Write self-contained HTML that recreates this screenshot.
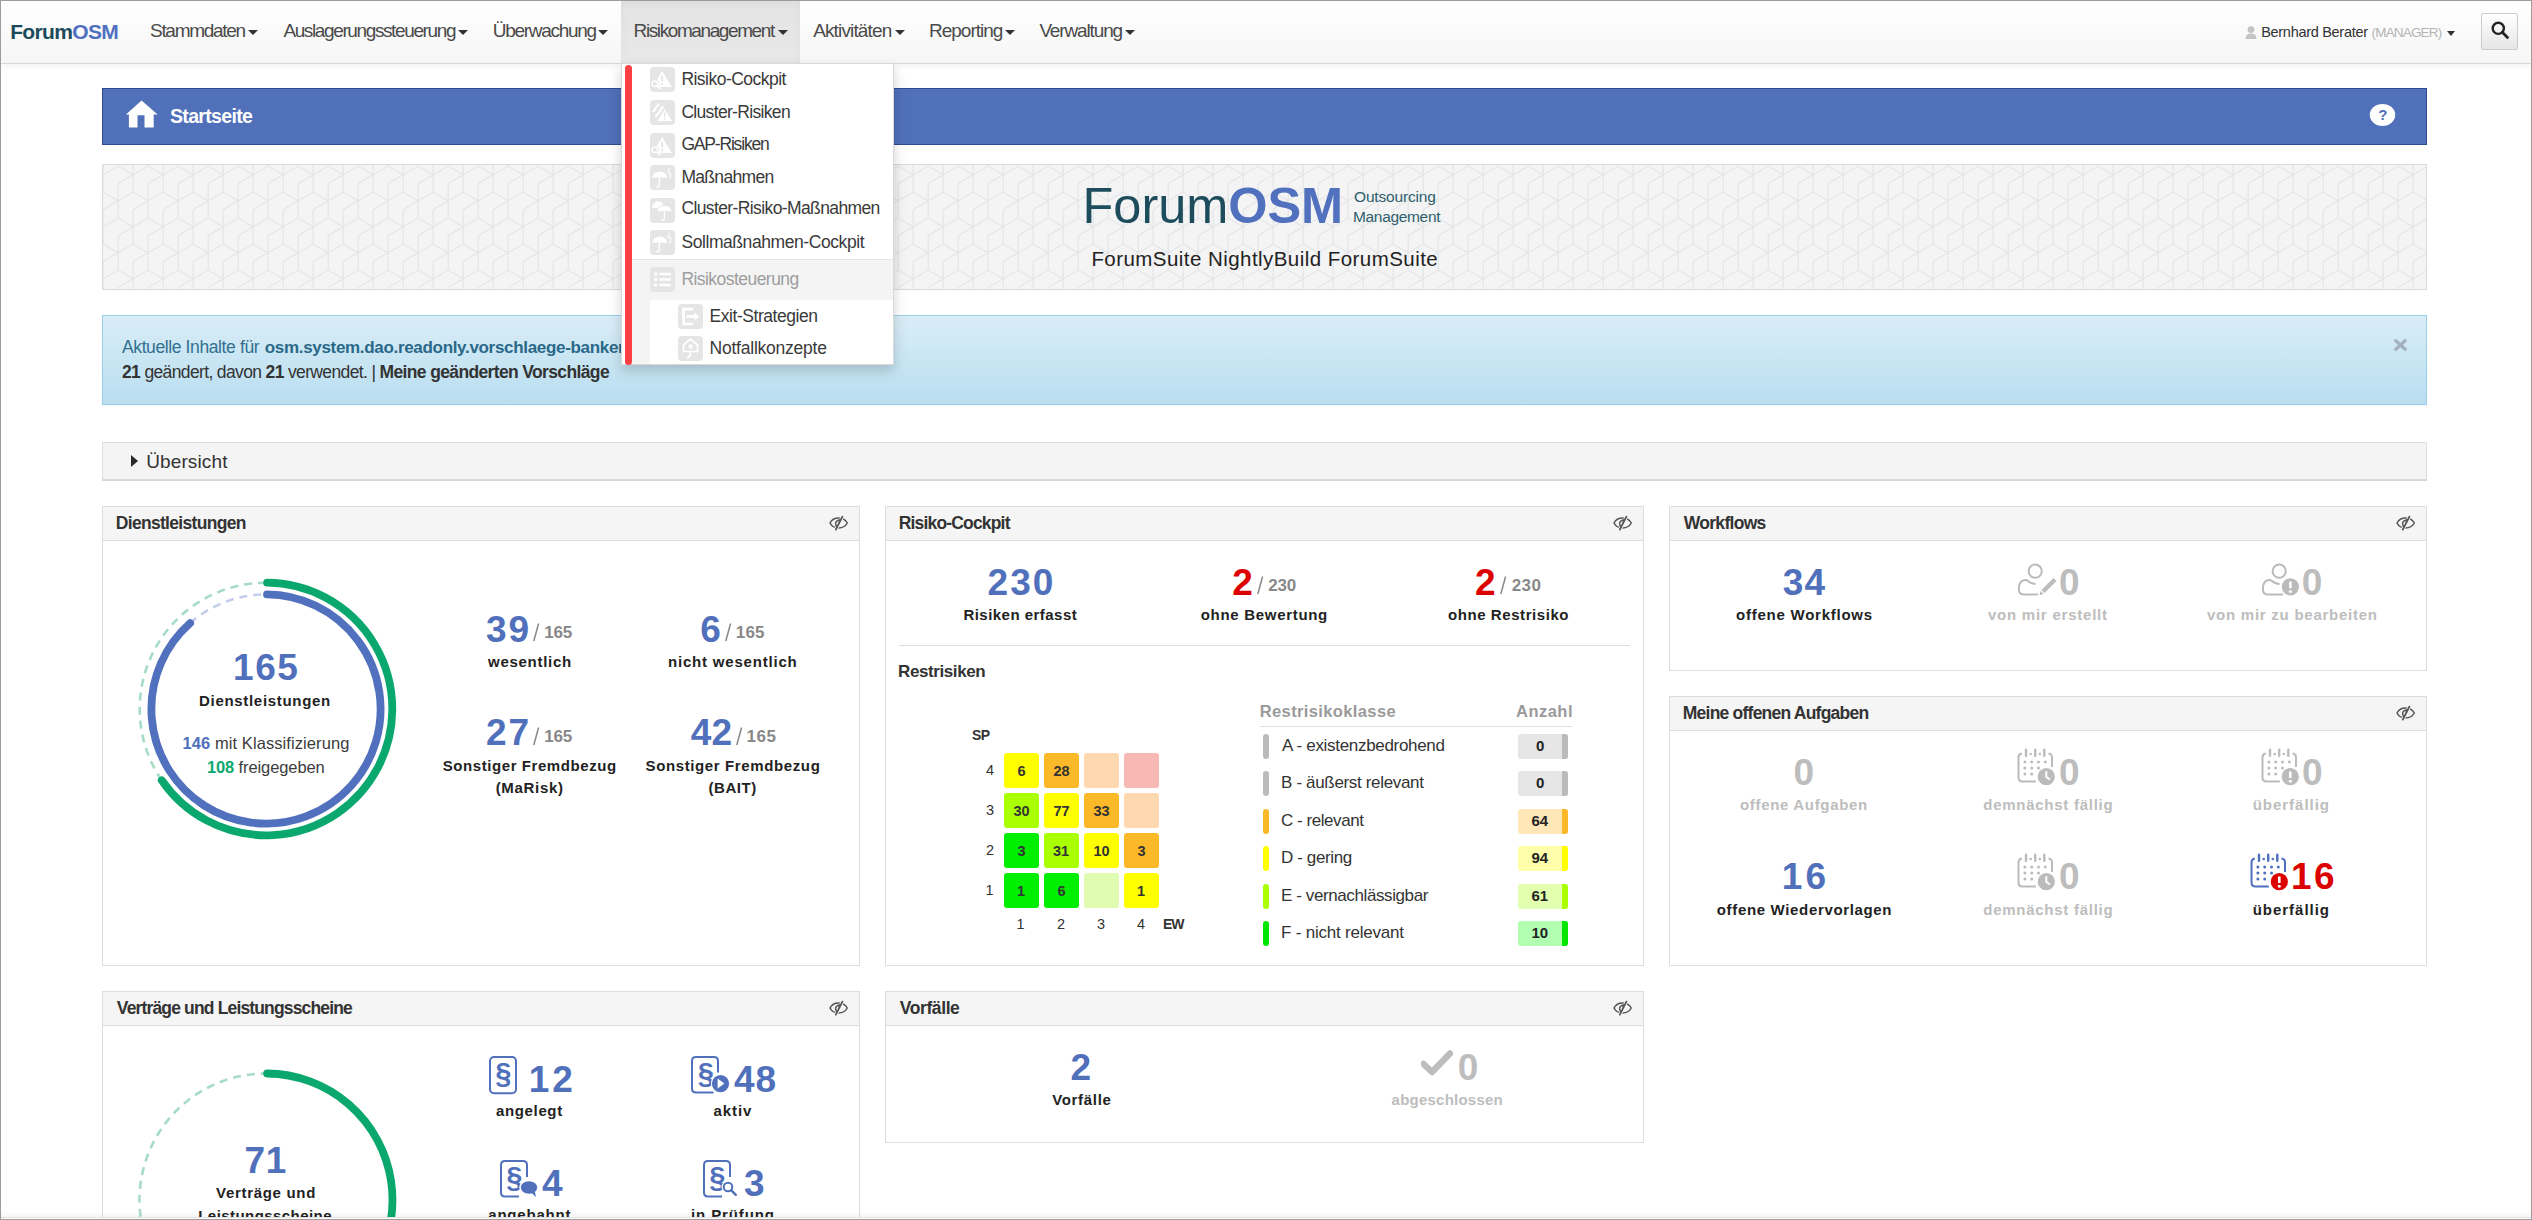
<!DOCTYPE html>
<html><head><meta charset="utf-8"><title>ForumOSM</title>
<style>
html,body{margin:0;padding:0;}
body{width:2532px;height:1220px;overflow:hidden;position:relative;background:#fff;font-family:'Liberation Sans',sans-serif;}
.t{position:absolute;white-space:nowrap;line-height:1;}
.a{position:absolute;box-sizing:border-box;}
</style></head><body>

<div class="a" style="left:0px;top:0px;width:2532px;height:64px;background:linear-gradient(#ffffff,#f6f6f6);border-bottom:1px solid #d8d8d8;box-shadow:0 1px 7px rgba(0,0,0,.07)"></div>
<div class="a" style="left:621px;top:1px;width:179px;height:62px;background:linear-gradient(#e4e4e4,#e8e8e8);box-shadow:inset 0 3px 9px rgba(0,0,0,.04)"></div>
<div class="t" id="t0" style="left:10.18px;top:21.22px;font-size:21px;font-weight:700;color:#1b4b5a;letter-spacing:-0.657px;"><span style="color:#1b4b5a">Forum</span><span style="color:#4f6fbf">OSM</span></div>
<div class="t" id="t1" style="left:150.00px;top:21.32px;font-size:19px;font-weight:400;color:#4a4a4a;letter-spacing:-1.289px;">Stammdaten</div>
<div class="a" style="left:247.5px;top:30px;width:0;height:0;border-left:5.0px solid transparent;border-right:5.0px solid transparent;border-top:5.2px solid #333"></div>
<div class="t" id="t2" style="left:283.38px;top:21.32px;font-size:19px;font-weight:400;color:#4a4a4a;letter-spacing:-1.380px;">Auslagerungssteuerung</div>
<div class="a" style="left:458.1px;top:30px;width:0;height:0;border-left:5.0px solid transparent;border-right:5.0px solid transparent;border-top:5.2px solid #333"></div>
<div class="t" id="t3" style="left:492.76px;top:21.32px;font-size:19px;font-weight:400;color:#4a4a4a;letter-spacing:-1.280px;">Überwachung</div>
<div class="a" style="left:597.9px;top:30px;width:0;height:0;border-left:5.0px solid transparent;border-right:5.0px solid transparent;border-top:5.2px solid #333"></div>
<div class="t" id="t4" style="left:633.57px;top:21.32px;font-size:19px;font-weight:400;color:#4a4a4a;letter-spacing:-1.400px;">Risikomanagement</div>
<div class="a" style="left:777.7px;top:30px;width:0;height:0;border-left:5.0px solid transparent;border-right:5.0px solid transparent;border-top:5.2px solid #333"></div>
<div class="t" id="t5" style="left:813.17px;top:21.32px;font-size:19px;font-weight:400;color:#4a4a4a;letter-spacing:-0.860px;">Aktivitäten</div>
<div class="a" style="left:895.0px;top:30px;width:0;height:0;border-left:5.0px solid transparent;border-right:5.0px solid transparent;border-top:5.2px solid #333"></div>
<div class="t" id="t6" style="left:929.00px;top:21.32px;font-size:19px;font-weight:400;color:#4a4a4a;letter-spacing:-1.000px;">Reporting</div>
<div class="a" style="left:1005.2px;top:30px;width:0;height:0;border-left:5.0px solid transparent;border-right:5.0px solid transparent;border-top:5.2px solid #333"></div>
<div class="t" id="t7" style="left:1039.38px;top:21.32px;font-size:19px;font-weight:400;color:#4a4a4a;letter-spacing:-1.133px;">Verwaltung</div>
<div class="a" style="left:1125.3px;top:30px;width:0;height:0;border-left:5.0px solid transparent;border-right:5.0px solid transparent;border-top:5.2px solid #333"></div>
<svg class="a" style="left:2245px;top:26px;" width="12" height="13" viewBox="0 0 12 13"><circle cx="6" cy="3.6" r="3.4" fill="#c4c4c4"/><path d="M0.5 13 Q0.5 7.6 6 7.6 Q11.5 7.6 11.5 13 Z" fill="#c4c4c4"/></svg>
<div class="t" id="t8" style="left:2261.18px;top:24.83px;font-size:14.5px;font-weight:400;color:#333;letter-spacing:-0.293px;">Bernhard Berater</div>
<div class="t" id="t9" style="left:2371.57px;top:25.67px;font-size:13.5px;font-weight:400;color:#b5b5b5;letter-spacing:-0.825px;">(MANAGER)</div>
<div class="a" style="left:2446.5px;top:31px;width:0;height:0;border-left:4.5px solid transparent;border-right:4.5px solid transparent;border-top:5px solid #333"></div>
<div class="a" style="left:2481px;top:13px;width:37px;height:37px;border:1px solid #cccccc;border-radius:2px;background:linear-gradient(#ffffff,#e6e6e6)"></div>
<svg class="a" style="left:2491px;top:21px;" width="19" height="19" viewBox="0 0 19 19"><circle cx="7.3" cy="7.3" r="5.6" fill="none" stroke="#222" stroke-width="2.4"/><line x1="11.3" y1="11.3" x2="16.5" y2="16.5" stroke="#222" stroke-width="2.8" stroke-linecap="round"/></svg>
<div class="a" style="left:102px;top:88px;width:2325px;height:57px;background:#5070ba;border:1px solid #2f4b8f"></div>
<svg class="a" style="left:124px;top:99px;" width="36" height="30" viewBox="0 0 36 30"><path d="M1.9 15.6 L17.6 1.5 L33.6 15.6 L29.7 15.6 L29.7 28.5 L20.5 28.5 L20.5 16.2 L13.5 16.2 L13.5 28.5 L4.9 28.5 L4.9 15.6 Z" fill="#fff"/></svg>
<div class="t" id="t10" style="left:170.00px;top:106.89px;font-size:19.5px;font-weight:700;color:#fff;letter-spacing:-0.667px;">Startseite</div>
<svg class="a" style="left:2369px;top:102px;" width="28" height="26" viewBox="0 0 28 26"><ellipse cx="13.5" cy="12.9" rx="12.7" ry="11" fill="#fff"/><text x="13.9" y="18" text-anchor="middle" font-family="Liberation Sans" font-weight="bold" font-size="15" fill="#4f6fbb">?</text></svg>
<div class="a" style="left:102px;top:164px;width:2325px;height:126px;border:1px solid #dadada;background:#f4f4f4;overflow:hidden"><svg width="2325" height="126" style="position:absolute;left:-1px;top:-1px"><path d="M-13.80 -32.48L-13.80 2.16M-13.80 -32.48L1.20 -41.14M-13.80 2.16L-28.80 10.82M-13.80 2.16L1.20 10.82M-13.80 19.48L-13.80 54.12M-13.80 19.48L1.20 10.82M-13.80 54.12L-28.80 62.78M-13.80 54.12L1.20 62.78M-13.80 71.44L-13.80 106.08M-13.80 71.44L1.20 62.78M-13.80 106.08L-28.80 114.74M-13.80 106.08L1.20 114.74M-13.80 123.40L-13.80 158.04M-13.80 123.40L1.20 114.74M-13.80 158.04L-28.80 166.70M-13.80 158.04L1.20 166.70M1.20 -58.46L1.20 -23.82M1.20 -58.46L16.20 -67.12M1.20 -23.82L-13.80 -15.16M1.20 -23.82L16.20 -15.16M1.20 -6.50L1.20 28.14M1.20 -6.50L16.20 -15.16M1.20 28.14L-13.80 36.80M1.20 28.14L16.20 36.80M1.20 45.46L1.20 80.10M1.20 45.46L16.20 36.80M1.20 80.10L-13.80 88.76M1.20 80.10L16.20 88.76M1.20 97.42L1.20 132.06M1.20 97.42L16.20 88.76M1.20 132.06L-13.80 140.72M1.20 132.06L16.20 140.72M1.20 149.38L1.20 184.03M1.20 149.38L16.20 140.72M1.20 184.03L-13.80 192.69M1.20 184.03L16.20 192.69M16.20 -32.48L16.20 2.16M16.20 -32.48L31.20 -41.14M16.20 2.16L1.20 10.82M16.20 2.16L31.20 10.82M16.20 19.48L16.20 54.12M16.20 19.48L31.20 10.82M16.20 54.12L1.20 62.78M16.20 54.12L31.20 62.78M16.20 71.44L16.20 106.08M16.20 71.44L31.20 62.78M16.20 106.08L1.20 114.74M16.20 106.08L31.20 114.74M16.20 123.40L16.20 158.04M16.20 123.40L31.20 114.74M16.20 158.04L1.20 166.70M16.20 158.04L31.20 166.70M31.20 -58.46L31.20 -23.82M31.20 -58.46L46.20 -67.12M31.20 -23.82L16.20 -15.16M31.20 -23.82L46.20 -15.16M31.20 -6.50L31.20 28.14M31.20 -6.50L46.20 -15.16M31.20 28.14L16.20 36.80M31.20 28.14L46.20 36.80M31.20 45.46L31.20 80.10M31.20 45.46L46.20 36.80M31.20 80.10L16.20 88.76M31.20 80.10L46.20 88.76M31.20 97.42L31.20 132.06M31.20 97.42L46.20 88.76M31.20 132.06L16.20 140.72M31.20 132.06L46.20 140.72M31.20 149.38L31.20 184.03M31.20 149.38L46.20 140.72M31.20 184.03L16.20 192.69M31.20 184.03L46.20 192.69M46.20 -32.48L46.20 2.16M46.20 -32.48L61.20 -41.14M46.20 2.16L31.20 10.82M46.20 2.16L61.20 10.82M46.20 19.48L46.20 54.12M46.20 19.48L61.20 10.82M46.20 54.12L31.20 62.78M46.20 54.12L61.20 62.78M46.20 71.44L46.20 106.08M46.20 71.44L61.20 62.78M46.20 106.08L31.20 114.74M46.20 106.08L61.20 114.74M46.20 123.40L46.20 158.04M46.20 123.40L61.20 114.74M46.20 158.04L31.20 166.70M46.20 158.04L61.20 166.70M61.20 -58.46L61.20 -23.82M61.20 -58.46L76.20 -67.12M61.20 -23.82L46.20 -15.16M61.20 -23.82L76.20 -15.16M61.20 -6.50L61.20 28.14M61.20 -6.50L76.20 -15.16M61.20 28.14L46.20 36.80M61.20 28.14L76.20 36.80M61.20 45.46L61.20 80.10M61.20 45.46L76.20 36.80M61.20 80.10L46.20 88.76M61.20 80.10L76.20 88.76M61.20 97.42L61.20 132.06M61.20 97.42L76.20 88.76M61.20 132.06L46.20 140.72M61.20 132.06L76.20 140.72M61.20 149.38L61.20 184.03M61.20 149.38L76.20 140.72M61.20 184.03L46.20 192.69M61.20 184.03L76.20 192.69M76.20 -32.48L76.20 2.16M76.20 -32.48L91.20 -41.14M76.20 2.16L61.20 10.82M76.20 2.16L91.20 10.82M76.20 19.48L76.20 54.12M76.20 19.48L91.20 10.82M76.20 54.12L61.20 62.78M76.20 54.12L91.20 62.78M76.20 71.44L76.20 106.08M76.20 71.44L91.20 62.78M76.20 106.08L61.20 114.74M76.20 106.08L91.20 114.74M76.20 123.40L76.20 158.04M76.20 123.40L91.20 114.74M76.20 158.04L61.20 166.70M76.20 158.04L91.20 166.70M91.20 -58.46L91.20 -23.82M91.20 -58.46L106.20 -67.12M91.20 -23.82L76.20 -15.16M91.20 -23.82L106.20 -15.16M91.20 -6.50L91.20 28.14M91.20 -6.50L106.20 -15.16M91.20 28.14L76.20 36.80M91.20 28.14L106.20 36.80M91.20 45.46L91.20 80.10M91.20 45.46L106.20 36.80M91.20 80.10L76.20 88.76M91.20 80.10L106.20 88.76M91.20 97.42L91.20 132.06M91.20 97.42L106.20 88.76M91.20 132.06L76.20 140.72M91.20 132.06L106.20 140.72M91.20 149.38L91.20 184.03M91.20 149.38L106.20 140.72M91.20 184.03L76.20 192.69M91.20 184.03L106.20 192.69M106.20 -32.48L106.20 2.16M106.20 -32.48L121.20 -41.14M106.20 2.16L91.20 10.82M106.20 2.16L121.20 10.82M106.20 19.48L106.20 54.12M106.20 19.48L121.20 10.82M106.20 54.12L91.20 62.78M106.20 54.12L121.20 62.78M106.20 71.44L106.20 106.08M106.20 71.44L121.20 62.78M106.20 106.08L91.20 114.74M106.20 106.08L121.20 114.74M106.20 123.40L106.20 158.04M106.20 123.40L121.20 114.74M106.20 158.04L91.20 166.70M106.20 158.04L121.20 166.70M121.20 -58.46L121.20 -23.82M121.20 -58.46L136.20 -67.12M121.20 -23.82L106.20 -15.16M121.20 -23.82L136.20 -15.16M121.20 -6.50L121.20 28.14M121.20 -6.50L136.20 -15.16M121.20 28.14L106.20 36.80M121.20 28.14L136.20 36.80M121.20 45.46L121.20 80.10M121.20 45.46L136.20 36.80M121.20 80.10L106.20 88.76M121.20 80.10L136.20 88.76M121.20 97.42L121.20 132.06M121.20 97.42L136.20 88.76M121.20 132.06L106.20 140.72M121.20 132.06L136.20 140.72M121.20 149.38L121.20 184.03M121.20 149.38L136.20 140.72M121.20 184.03L106.20 192.69M121.20 184.03L136.20 192.69M136.20 -32.48L136.20 2.16M136.20 -32.48L151.20 -41.14M136.20 2.16L121.20 10.82M136.20 2.16L151.20 10.82M136.20 19.48L136.20 54.12M136.20 19.48L151.20 10.82M136.20 54.12L121.20 62.78M136.20 54.12L151.20 62.78M136.20 71.44L136.20 106.08M136.20 71.44L151.20 62.78M136.20 106.08L121.20 114.74M136.20 106.08L151.20 114.74M136.20 123.40L136.20 158.04M136.20 123.40L151.20 114.74M136.20 158.04L121.20 166.70M136.20 158.04L151.20 166.70M151.20 -58.46L151.20 -23.82M151.20 -58.46L166.20 -67.12M151.20 -23.82L136.20 -15.16M151.20 -23.82L166.20 -15.16M151.20 -6.50L151.20 28.14M151.20 -6.50L166.20 -15.16M151.20 28.14L136.20 36.80M151.20 28.14L166.20 36.80M151.20 45.46L151.20 80.10M151.20 45.46L166.20 36.80M151.20 80.10L136.20 88.76M151.20 80.10L166.20 88.76M151.20 97.42L151.20 132.06M151.20 97.42L166.20 88.76M151.20 132.06L136.20 140.72M151.20 132.06L166.20 140.72M151.20 149.38L151.20 184.03M151.20 149.38L166.20 140.72M151.20 184.03L136.20 192.69M151.20 184.03L166.20 192.69M166.20 -32.48L166.20 2.16M166.20 -32.48L181.20 -41.14M166.20 2.16L151.20 10.82M166.20 2.16L181.20 10.82M166.20 19.48L166.20 54.12M166.20 19.48L181.20 10.82M166.20 54.12L151.20 62.78M166.20 54.12L181.20 62.78M166.20 71.44L166.20 106.08M166.20 71.44L181.20 62.78M166.20 106.08L151.20 114.74M166.20 106.08L181.20 114.74M166.20 123.40L166.20 158.04M166.20 123.40L181.20 114.74M166.20 158.04L151.20 166.70M166.20 158.04L181.20 166.70M181.20 -58.46L181.20 -23.82M181.20 -58.46L196.20 -67.12M181.20 -23.82L166.20 -15.16M181.20 -23.82L196.20 -15.16M181.20 -6.50L181.20 28.14M181.20 -6.50L196.20 -15.16M181.20 28.14L166.20 36.80M181.20 28.14L196.20 36.80M181.20 45.46L181.20 80.10M181.20 45.46L196.20 36.80M181.20 80.10L166.20 88.76M181.20 80.10L196.20 88.76M181.20 97.42L181.20 132.06M181.20 97.42L196.20 88.76M181.20 132.06L166.20 140.72M181.20 132.06L196.20 140.72M181.20 149.38L181.20 184.03M181.20 149.38L196.20 140.72M181.20 184.03L166.20 192.69M181.20 184.03L196.20 192.69M196.20 -32.48L196.20 2.16M196.20 -32.48L211.20 -41.14M196.20 2.16L181.20 10.82M196.20 2.16L211.20 10.82M196.20 19.48L196.20 54.12M196.20 19.48L211.20 10.82M196.20 54.12L181.20 62.78M196.20 54.12L211.20 62.78M196.20 71.44L196.20 106.08M196.20 71.44L211.20 62.78M196.20 106.08L181.20 114.74M196.20 106.08L211.20 114.74M196.20 123.40L196.20 158.04M196.20 123.40L211.20 114.74M196.20 158.04L181.20 166.70M196.20 158.04L211.20 166.70M211.20 -58.46L211.20 -23.82M211.20 -58.46L226.20 -67.12M211.20 -23.82L196.20 -15.16M211.20 -23.82L226.20 -15.16M211.20 -6.50L211.20 28.14M211.20 -6.50L226.20 -15.16M211.20 28.14L196.20 36.80M211.20 28.14L226.20 36.80M211.20 45.46L211.20 80.10M211.20 45.46L226.20 36.80M211.20 80.10L196.20 88.76M211.20 80.10L226.20 88.76M211.20 97.42L211.20 132.06M211.20 97.42L226.20 88.76M211.20 132.06L196.20 140.72M211.20 132.06L226.20 140.72M211.20 149.38L211.20 184.03M211.20 149.38L226.20 140.72M211.20 184.03L196.20 192.69M211.20 184.03L226.20 192.69M226.20 -32.48L226.20 2.16M226.20 -32.48L241.20 -41.14M226.20 2.16L211.20 10.82M226.20 2.16L241.20 10.82M226.20 19.48L226.20 54.12M226.20 19.48L241.20 10.82M226.20 54.12L211.20 62.78M226.20 54.12L241.20 62.78M226.20 71.44L226.20 106.08M226.20 71.44L241.20 62.78M226.20 106.08L211.20 114.74M226.20 106.08L241.20 114.74M226.20 123.40L226.20 158.04M226.20 123.40L241.20 114.74M226.20 158.04L211.20 166.70M226.20 158.04L241.20 166.70M241.20 -58.46L241.20 -23.82M241.20 -58.46L256.20 -67.12M241.20 -23.82L226.20 -15.16M241.20 -23.82L256.20 -15.16M241.20 -6.50L241.20 28.14M241.20 -6.50L256.20 -15.16M241.20 28.14L226.20 36.80M241.20 28.14L256.20 36.80M241.20 45.46L241.20 80.10M241.20 45.46L256.20 36.80M241.20 80.10L226.20 88.76M241.20 80.10L256.20 88.76M241.20 97.42L241.20 132.06M241.20 97.42L256.20 88.76M241.20 132.06L226.20 140.72M241.20 132.06L256.20 140.72M241.20 149.38L241.20 184.03M241.20 149.38L256.20 140.72M241.20 184.03L226.20 192.69M241.20 184.03L256.20 192.69M256.20 -32.48L256.20 2.16M256.20 -32.48L271.20 -41.14M256.20 2.16L241.20 10.82M256.20 2.16L271.20 10.82M256.20 19.48L256.20 54.12M256.20 19.48L271.20 10.82M256.20 54.12L241.20 62.78M256.20 54.12L271.20 62.78M256.20 71.44L256.20 106.08M256.20 71.44L271.20 62.78M256.20 106.08L241.20 114.74M256.20 106.08L271.20 114.74M256.20 123.40L256.20 158.04M256.20 123.40L271.20 114.74M256.20 158.04L241.20 166.70M256.20 158.04L271.20 166.70M271.20 -58.46L271.20 -23.82M271.20 -58.46L286.20 -67.12M271.20 -23.82L256.20 -15.16M271.20 -23.82L286.20 -15.16M271.20 -6.50L271.20 28.14M271.20 -6.50L286.20 -15.16M271.20 28.14L256.20 36.80M271.20 28.14L286.20 36.80M271.20 45.46L271.20 80.10M271.20 45.46L286.20 36.80M271.20 80.10L256.20 88.76M271.20 80.10L286.20 88.76M271.20 97.42L271.20 132.06M271.20 97.42L286.20 88.76M271.20 132.06L256.20 140.72M271.20 132.06L286.20 140.72M271.20 149.38L271.20 184.03M271.20 149.38L286.20 140.72M271.20 184.03L256.20 192.69M271.20 184.03L286.20 192.69M286.20 -32.48L286.20 2.16M286.20 -32.48L301.20 -41.14M286.20 2.16L271.20 10.82M286.20 2.16L301.20 10.82M286.20 19.48L286.20 54.12M286.20 19.48L301.20 10.82M286.20 54.12L271.20 62.78M286.20 54.12L301.20 62.78M286.20 71.44L286.20 106.08M286.20 71.44L301.20 62.78M286.20 106.08L271.20 114.74M286.20 106.08L301.20 114.74M286.20 123.40L286.20 158.04M286.20 123.40L301.20 114.74M286.20 158.04L271.20 166.70M286.20 158.04L301.20 166.70M301.20 -58.46L301.20 -23.82M301.20 -58.46L316.20 -67.12M301.20 -23.82L286.20 -15.16M301.20 -23.82L316.20 -15.16M301.20 -6.50L301.20 28.14M301.20 -6.50L316.20 -15.16M301.20 28.14L286.20 36.80M301.20 28.14L316.20 36.80M301.20 45.46L301.20 80.10M301.20 45.46L316.20 36.80M301.20 80.10L286.20 88.76M301.20 80.10L316.20 88.76M301.20 97.42L301.20 132.06M301.20 97.42L316.20 88.76M301.20 132.06L286.20 140.72M301.20 132.06L316.20 140.72M301.20 149.38L301.20 184.03M301.20 149.38L316.20 140.72M301.20 184.03L286.20 192.69M301.20 184.03L316.20 192.69M316.20 -32.48L316.20 2.16M316.20 -32.48L331.20 -41.14M316.20 2.16L301.20 10.82M316.20 2.16L331.20 10.82M316.20 19.48L316.20 54.12M316.20 19.48L331.20 10.82M316.20 54.12L301.20 62.78M316.20 54.12L331.20 62.78M316.20 71.44L316.20 106.08M316.20 71.44L331.20 62.78M316.20 106.08L301.20 114.74M316.20 106.08L331.20 114.74M316.20 123.40L316.20 158.04M316.20 123.40L331.20 114.74M316.20 158.04L301.20 166.70M316.20 158.04L331.20 166.70M331.20 -58.46L331.20 -23.82M331.20 -58.46L346.20 -67.12M331.20 -23.82L316.20 -15.16M331.20 -23.82L346.20 -15.16M331.20 -6.50L331.20 28.14M331.20 -6.50L346.20 -15.16M331.20 28.14L316.20 36.80M331.20 28.14L346.20 36.80M331.20 45.46L331.20 80.10M331.20 45.46L346.20 36.80M331.20 80.10L316.20 88.76M331.20 80.10L346.20 88.76M331.20 97.42L331.20 132.06M331.20 97.42L346.20 88.76M331.20 132.06L316.20 140.72M331.20 132.06L346.20 140.72M331.20 149.38L331.20 184.03M331.20 149.38L346.20 140.72M331.20 184.03L316.20 192.69M331.20 184.03L346.20 192.69M346.20 -32.48L346.20 2.16M346.20 -32.48L361.20 -41.14M346.20 2.16L331.20 10.82M346.20 2.16L361.20 10.82M346.20 19.48L346.20 54.12M346.20 19.48L361.20 10.82M346.20 54.12L331.20 62.78M346.20 54.12L361.20 62.78M346.20 71.44L346.20 106.08M346.20 71.44L361.20 62.78M346.20 106.08L331.20 114.74M346.20 106.08L361.20 114.74M346.20 123.40L346.20 158.04M346.20 123.40L361.20 114.74M346.20 158.04L331.20 166.70M346.20 158.04L361.20 166.70M361.20 -58.46L361.20 -23.82M361.20 -58.46L376.20 -67.12M361.20 -23.82L346.20 -15.16M361.20 -23.82L376.20 -15.16M361.20 -6.50L361.20 28.14M361.20 -6.50L376.20 -15.16M361.20 28.14L346.20 36.80M361.20 28.14L376.20 36.80M361.20 45.46L361.20 80.10M361.20 45.46L376.20 36.80M361.20 80.10L346.20 88.76M361.20 80.10L376.20 88.76M361.20 97.42L361.20 132.06M361.20 97.42L376.20 88.76M361.20 132.06L346.20 140.72M361.20 132.06L376.20 140.72M361.20 149.38L361.20 184.03M361.20 149.38L376.20 140.72M361.20 184.03L346.20 192.69M361.20 184.03L376.20 192.69M376.20 -32.48L376.20 2.16M376.20 -32.48L391.20 -41.14M376.20 2.16L361.20 10.82M376.20 2.16L391.20 10.82M376.20 19.48L376.20 54.12M376.20 19.48L391.20 10.82M376.20 54.12L361.20 62.78M376.20 54.12L391.20 62.78M376.20 71.44L376.20 106.08M376.20 71.44L391.20 62.78M376.20 106.08L361.20 114.74M376.20 106.08L391.20 114.74M376.20 123.40L376.20 158.04M376.20 123.40L391.20 114.74M376.20 158.04L361.20 166.70M376.20 158.04L391.20 166.70M391.20 -58.46L391.20 -23.82M391.20 -58.46L406.20 -67.12M391.20 -23.82L376.20 -15.16M391.20 -23.82L406.20 -15.16M391.20 -6.50L391.20 28.14M391.20 -6.50L406.20 -15.16M391.20 28.14L376.20 36.80M391.20 28.14L406.20 36.80M391.20 45.46L391.20 80.10M391.20 45.46L406.20 36.80M391.20 80.10L376.20 88.76M391.20 80.10L406.20 88.76M391.20 97.42L391.20 132.06M391.20 97.42L406.20 88.76M391.20 132.06L376.20 140.72M391.20 132.06L406.20 140.72M391.20 149.38L391.20 184.03M391.20 149.38L406.20 140.72M391.20 184.03L376.20 192.69M391.20 184.03L406.20 192.69M406.20 -32.48L406.20 2.16M406.20 -32.48L421.20 -41.14M406.20 2.16L391.20 10.82M406.20 2.16L421.20 10.82M406.20 19.48L406.20 54.12M406.20 19.48L421.20 10.82M406.20 54.12L391.20 62.78M406.20 54.12L421.20 62.78M406.20 71.44L406.20 106.08M406.20 71.44L421.20 62.78M406.20 106.08L391.20 114.74M406.20 106.08L421.20 114.74M406.20 123.40L406.20 158.04M406.20 123.40L421.20 114.74M406.20 158.04L391.20 166.70M406.20 158.04L421.20 166.70M421.20 -58.46L421.20 -23.82M421.20 -58.46L436.20 -67.12M421.20 -23.82L406.20 -15.16M421.20 -23.82L436.20 -15.16M421.20 -6.50L421.20 28.14M421.20 -6.50L436.20 -15.16M421.20 28.14L406.20 36.80M421.20 28.14L436.20 36.80M421.20 45.46L421.20 80.10M421.20 45.46L436.20 36.80M421.20 80.10L406.20 88.76M421.20 80.10L436.20 88.76M421.20 97.42L421.20 132.06M421.20 97.42L436.20 88.76M421.20 132.06L406.20 140.72M421.20 132.06L436.20 140.72M421.20 149.38L421.20 184.03M421.20 149.38L436.20 140.72M421.20 184.03L406.20 192.69M421.20 184.03L436.20 192.69M436.20 -32.48L436.20 2.16M436.20 -32.48L451.20 -41.14M436.20 2.16L421.20 10.82M436.20 2.16L451.20 10.82M436.20 19.48L436.20 54.12M436.20 19.48L451.20 10.82M436.20 54.12L421.20 62.78M436.20 54.12L451.20 62.78M436.20 71.44L436.20 106.08M436.20 71.44L451.20 62.78M436.20 106.08L421.20 114.74M436.20 106.08L451.20 114.74M436.20 123.40L436.20 158.04M436.20 123.40L451.20 114.74M436.20 158.04L421.20 166.70M436.20 158.04L451.20 166.70M451.20 -58.46L451.20 -23.82M451.20 -58.46L466.20 -67.12M451.20 -23.82L436.20 -15.16M451.20 -23.82L466.20 -15.16M451.20 -6.50L451.20 28.14M451.20 -6.50L466.20 -15.16M451.20 28.14L436.20 36.80M451.20 28.14L466.20 36.80M451.20 45.46L451.20 80.10M451.20 45.46L466.20 36.80M451.20 80.10L436.20 88.76M451.20 80.10L466.20 88.76M451.20 97.42L451.20 132.06M451.20 97.42L466.20 88.76M451.20 132.06L436.20 140.72M451.20 132.06L466.20 140.72M451.20 149.38L451.20 184.03M451.20 149.38L466.20 140.72M451.20 184.03L436.20 192.69M451.20 184.03L466.20 192.69M466.20 -32.48L466.20 2.16M466.20 -32.48L481.20 -41.14M466.20 2.16L451.20 10.82M466.20 2.16L481.20 10.82M466.20 19.48L466.20 54.12M466.20 19.48L481.20 10.82M466.20 54.12L451.20 62.78M466.20 54.12L481.20 62.78M466.20 71.44L466.20 106.08M466.20 71.44L481.20 62.78M466.20 106.08L451.20 114.74M466.20 106.08L481.20 114.74M466.20 123.40L466.20 158.04M466.20 123.40L481.20 114.74M466.20 158.04L451.20 166.70M466.20 158.04L481.20 166.70M481.20 -58.46L481.20 -23.82M481.20 -58.46L496.20 -67.12M481.20 -23.82L466.20 -15.16M481.20 -23.82L496.20 -15.16M481.20 -6.50L481.20 28.14M481.20 -6.50L496.20 -15.16M481.20 28.14L466.20 36.80M481.20 28.14L496.20 36.80M481.20 45.46L481.20 80.10M481.20 45.46L496.20 36.80M481.20 80.10L466.20 88.76M481.20 80.10L496.20 88.76M481.20 97.42L481.20 132.06M481.20 97.42L496.20 88.76M481.20 132.06L466.20 140.72M481.20 132.06L496.20 140.72M481.20 149.38L481.20 184.03M481.20 149.38L496.20 140.72M481.20 184.03L466.20 192.69M481.20 184.03L496.20 192.69M496.20 -32.48L496.20 2.16M496.20 -32.48L511.20 -41.14M496.20 2.16L481.20 10.82M496.20 2.16L511.20 10.82M496.20 19.48L496.20 54.12M496.20 19.48L511.20 10.82M496.20 54.12L481.20 62.78M496.20 54.12L511.20 62.78M496.20 71.44L496.20 106.08M496.20 71.44L511.20 62.78M496.20 106.08L481.20 114.74M496.20 106.08L511.20 114.74M496.20 123.40L496.20 158.04M496.20 123.40L511.20 114.74M496.20 158.04L481.20 166.70M496.20 158.04L511.20 166.70M511.20 -58.46L511.20 -23.82M511.20 -58.46L526.20 -67.12M511.20 -23.82L496.20 -15.16M511.20 -23.82L526.20 -15.16M511.20 -6.50L511.20 28.14M511.20 -6.50L526.20 -15.16M511.20 28.14L496.20 36.80M511.20 28.14L526.20 36.80M511.20 45.46L511.20 80.10M511.20 45.46L526.20 36.80M511.20 80.10L496.20 88.76M511.20 80.10L526.20 88.76M511.20 97.42L511.20 132.06M511.20 97.42L526.20 88.76M511.20 132.06L496.20 140.72M511.20 132.06L526.20 140.72M511.20 149.38L511.20 184.03M511.20 149.38L526.20 140.72M511.20 184.03L496.20 192.69M511.20 184.03L526.20 192.69M526.20 -32.48L526.20 2.16M526.20 -32.48L541.20 -41.14M526.20 2.16L511.20 10.82M526.20 2.16L541.20 10.82M526.20 19.48L526.20 54.12M526.20 19.48L541.20 10.82M526.20 54.12L511.20 62.78M526.20 54.12L541.20 62.78M526.20 71.44L526.20 106.08M526.20 71.44L541.20 62.78M526.20 106.08L511.20 114.74M526.20 106.08L541.20 114.74M526.20 123.40L526.20 158.04M526.20 123.40L541.20 114.74M526.20 158.04L511.20 166.70M526.20 158.04L541.20 166.70M541.20 -58.46L541.20 -23.82M541.20 -58.46L556.20 -67.12M541.20 -23.82L526.20 -15.16M541.20 -23.82L556.20 -15.16M541.20 -6.50L541.20 28.14M541.20 -6.50L556.20 -15.16M541.20 28.14L526.20 36.80M541.20 28.14L556.20 36.80M541.20 45.46L541.20 80.10M541.20 45.46L556.20 36.80M541.20 80.10L526.20 88.76M541.20 80.10L556.20 88.76M541.20 97.42L541.20 132.06M541.20 97.42L556.20 88.76M541.20 132.06L526.20 140.72M541.20 132.06L556.20 140.72M541.20 149.38L541.20 184.03M541.20 149.38L556.20 140.72M541.20 184.03L526.20 192.69M541.20 184.03L556.20 192.69M556.20 -32.48L556.20 2.16M556.20 -32.48L571.20 -41.14M556.20 2.16L541.20 10.82M556.20 2.16L571.20 10.82M556.20 19.48L556.20 54.12M556.20 19.48L571.20 10.82M556.20 54.12L541.20 62.78M556.20 54.12L571.20 62.78M556.20 71.44L556.20 106.08M556.20 71.44L571.20 62.78M556.20 106.08L541.20 114.74M556.20 106.08L571.20 114.74M556.20 123.40L556.20 158.04M556.20 123.40L571.20 114.74M556.20 158.04L541.20 166.70M556.20 158.04L571.20 166.70M571.20 -58.46L571.20 -23.82M571.20 -58.46L586.20 -67.12M571.20 -23.82L556.20 -15.16M571.20 -23.82L586.20 -15.16M571.20 -6.50L571.20 28.14M571.20 -6.50L586.20 -15.16M571.20 28.14L556.20 36.80M571.20 28.14L586.20 36.80M571.20 45.46L571.20 80.10M571.20 45.46L586.20 36.80M571.20 80.10L556.20 88.76M571.20 80.10L586.20 88.76M571.20 97.42L571.20 132.06M571.20 97.42L586.20 88.76M571.20 132.06L556.20 140.72M571.20 132.06L586.20 140.72M571.20 149.38L571.20 184.03M571.20 149.38L586.20 140.72M571.20 184.03L556.20 192.69M571.20 184.03L586.20 192.69M586.20 -32.48L586.20 2.16M586.20 -32.48L601.20 -41.14M586.20 2.16L571.20 10.82M586.20 2.16L601.20 10.82M586.20 19.48L586.20 54.12M586.20 19.48L601.20 10.82M586.20 54.12L571.20 62.78M586.20 54.12L601.20 62.78M586.20 71.44L586.20 106.08M586.20 71.44L601.20 62.78M586.20 106.08L571.20 114.74M586.20 106.08L601.20 114.74M586.20 123.40L586.20 158.04M586.20 123.40L601.20 114.74M586.20 158.04L571.20 166.70M586.20 158.04L601.20 166.70M601.20 -58.46L601.20 -23.82M601.20 -58.46L616.20 -67.12M601.20 -23.82L586.20 -15.16M601.20 -23.82L616.20 -15.16M601.20 -6.50L601.20 28.14M601.20 -6.50L616.20 -15.16M601.20 28.14L586.20 36.80M601.20 28.14L616.20 36.80M601.20 45.46L601.20 80.10M601.20 45.46L616.20 36.80M601.20 80.10L586.20 88.76M601.20 80.10L616.20 88.76M601.20 97.42L601.20 132.06M601.20 97.42L616.20 88.76M601.20 132.06L586.20 140.72M601.20 132.06L616.20 140.72M601.20 149.38L601.20 184.03M601.20 149.38L616.20 140.72M601.20 184.03L586.20 192.69M601.20 184.03L616.20 192.69M616.20 -32.48L616.20 2.16M616.20 -32.48L631.20 -41.14M616.20 2.16L601.20 10.82M616.20 2.16L631.20 10.82M616.20 19.48L616.20 54.12M616.20 19.48L631.20 10.82M616.20 54.12L601.20 62.78M616.20 54.12L631.20 62.78M616.20 71.44L616.20 106.08M616.20 71.44L631.20 62.78M616.20 106.08L601.20 114.74M616.20 106.08L631.20 114.74M616.20 123.40L616.20 158.04M616.20 123.40L631.20 114.74M616.20 158.04L601.20 166.70M616.20 158.04L631.20 166.70M631.20 -58.46L631.20 -23.82M631.20 -58.46L646.20 -67.12M631.20 -23.82L616.20 -15.16M631.20 -23.82L646.20 -15.16M631.20 -6.50L631.20 28.14M631.20 -6.50L646.20 -15.16M631.20 28.14L616.20 36.80M631.20 28.14L646.20 36.80M631.20 45.46L631.20 80.10M631.20 45.46L646.20 36.80M631.20 80.10L616.20 88.76M631.20 80.10L646.20 88.76M631.20 97.42L631.20 132.06M631.20 97.42L646.20 88.76M631.20 132.06L616.20 140.72M631.20 132.06L646.20 140.72M631.20 149.38L631.20 184.03M631.20 149.38L646.20 140.72M631.20 184.03L616.20 192.69M631.20 184.03L646.20 192.69M646.20 -32.48L646.20 2.16M646.20 -32.48L661.20 -41.14M646.20 2.16L631.20 10.82M646.20 2.16L661.20 10.82M646.20 19.48L646.20 54.12M646.20 19.48L661.20 10.82M646.20 54.12L631.20 62.78M646.20 54.12L661.20 62.78M646.20 71.44L646.20 106.08M646.20 71.44L661.20 62.78M646.20 106.08L631.20 114.74M646.20 106.08L661.20 114.74M646.20 123.40L646.20 158.04M646.20 123.40L661.20 114.74M646.20 158.04L631.20 166.70M646.20 158.04L661.20 166.70M661.20 -58.46L661.20 -23.82M661.20 -58.46L676.20 -67.12M661.20 -23.82L646.20 -15.16M661.20 -23.82L676.20 -15.16M661.20 -6.50L661.20 28.14M661.20 -6.50L676.20 -15.16M661.20 28.14L646.20 36.80M661.20 28.14L676.20 36.80M661.20 45.46L661.20 80.10M661.20 45.46L676.20 36.80M661.20 80.10L646.20 88.76M661.20 80.10L676.20 88.76M661.20 97.42L661.20 132.06M661.20 97.42L676.20 88.76M661.20 132.06L646.20 140.72M661.20 132.06L676.20 140.72M661.20 149.38L661.20 184.03M661.20 149.38L676.20 140.72M661.20 184.03L646.20 192.69M661.20 184.03L676.20 192.69M676.20 -32.48L676.20 2.16M676.20 -32.48L691.20 -41.14M676.20 2.16L661.20 10.82M676.20 2.16L691.20 10.82M676.20 19.48L676.20 54.12M676.20 19.48L691.20 10.82M676.20 54.12L661.20 62.78M676.20 54.12L691.20 62.78M676.20 71.44L676.20 106.08M676.20 71.44L691.20 62.78M676.20 106.08L661.20 114.74M676.20 106.08L691.20 114.74M676.20 123.40L676.20 158.04M676.20 123.40L691.20 114.74M676.20 158.04L661.20 166.70M676.20 158.04L691.20 166.70M691.20 -58.46L691.20 -23.82M691.20 -58.46L706.20 -67.12M691.20 -23.82L676.20 -15.16M691.20 -23.82L706.20 -15.16M691.20 -6.50L691.20 28.14M691.20 -6.50L706.20 -15.16M691.20 28.14L676.20 36.80M691.20 28.14L706.20 36.80M691.20 45.46L691.20 80.10M691.20 45.46L706.20 36.80M691.20 80.10L676.20 88.76M691.20 80.10L706.20 88.76M691.20 97.42L691.20 132.06M691.20 97.42L706.20 88.76M691.20 132.06L676.20 140.72M691.20 132.06L706.20 140.72M691.20 149.38L691.20 184.03M691.20 149.38L706.20 140.72M691.20 184.03L676.20 192.69M691.20 184.03L706.20 192.69M706.20 -32.48L706.20 2.16M706.20 -32.48L721.20 -41.14M706.20 2.16L691.20 10.82M706.20 2.16L721.20 10.82M706.20 19.48L706.20 54.12M706.20 19.48L721.20 10.82M706.20 54.12L691.20 62.78M706.20 54.12L721.20 62.78M706.20 71.44L706.20 106.08M706.20 71.44L721.20 62.78M706.20 106.08L691.20 114.74M706.20 106.08L721.20 114.74M706.20 123.40L706.20 158.04M706.20 123.40L721.20 114.74M706.20 158.04L691.20 166.70M706.20 158.04L721.20 166.70M721.20 -58.46L721.20 -23.82M721.20 -58.46L736.20 -67.12M721.20 -23.82L706.20 -15.16M721.20 -23.82L736.20 -15.16M721.20 -6.50L721.20 28.14M721.20 -6.50L736.20 -15.16M721.20 28.14L706.20 36.80M721.20 28.14L736.20 36.80M721.20 45.46L721.20 80.10M721.20 45.46L736.20 36.80M721.20 80.10L706.20 88.76M721.20 80.10L736.20 88.76M721.20 97.42L721.20 132.06M721.20 97.42L736.20 88.76M721.20 132.06L706.20 140.72M721.20 132.06L736.20 140.72M721.20 149.38L721.20 184.03M721.20 149.38L736.20 140.72M721.20 184.03L706.20 192.69M721.20 184.03L736.20 192.69M736.20 -32.48L736.20 2.16M736.20 -32.48L751.20 -41.14M736.20 2.16L721.20 10.82M736.20 2.16L751.20 10.82M736.20 19.48L736.20 54.12M736.20 19.48L751.20 10.82M736.20 54.12L721.20 62.78M736.20 54.12L751.20 62.78M736.20 71.44L736.20 106.08M736.20 71.44L751.20 62.78M736.20 106.08L721.20 114.74M736.20 106.08L751.20 114.74M736.20 123.40L736.20 158.04M736.20 123.40L751.20 114.74M736.20 158.04L721.20 166.70M736.20 158.04L751.20 166.70M751.20 -58.46L751.20 -23.82M751.20 -58.46L766.20 -67.12M751.20 -23.82L736.20 -15.16M751.20 -23.82L766.20 -15.16M751.20 -6.50L751.20 28.14M751.20 -6.50L766.20 -15.16M751.20 28.14L736.20 36.80M751.20 28.14L766.20 36.80M751.20 45.46L751.20 80.10M751.20 45.46L766.20 36.80M751.20 80.10L736.20 88.76M751.20 80.10L766.20 88.76M751.20 97.42L751.20 132.06M751.20 97.42L766.20 88.76M751.20 132.06L736.20 140.72M751.20 132.06L766.20 140.72M751.20 149.38L751.20 184.03M751.20 149.38L766.20 140.72M751.20 184.03L736.20 192.69M751.20 184.03L766.20 192.69M766.20 -32.48L766.20 2.16M766.20 -32.48L781.20 -41.14M766.20 2.16L751.20 10.82M766.20 2.16L781.20 10.82M766.20 19.48L766.20 54.12M766.20 19.48L781.20 10.82M766.20 54.12L751.20 62.78M766.20 54.12L781.20 62.78M766.20 71.44L766.20 106.08M766.20 71.44L781.20 62.78M766.20 106.08L751.20 114.74M766.20 106.08L781.20 114.74M766.20 123.40L766.20 158.04M766.20 123.40L781.20 114.74M766.20 158.04L751.20 166.70M766.20 158.04L781.20 166.70M781.20 -58.46L781.20 -23.82M781.20 -58.46L796.20 -67.12M781.20 -23.82L766.20 -15.16M781.20 -23.82L796.20 -15.16M781.20 -6.50L781.20 28.14M781.20 -6.50L796.20 -15.16M781.20 28.14L766.20 36.80M781.20 28.14L796.20 36.80M781.20 45.46L781.20 80.10M781.20 45.46L796.20 36.80M781.20 80.10L766.20 88.76M781.20 80.10L796.20 88.76M781.20 97.42L781.20 132.06M781.20 97.42L796.20 88.76M781.20 132.06L766.20 140.72M781.20 132.06L796.20 140.72M781.20 149.38L781.20 184.03M781.20 149.38L796.20 140.72M781.20 184.03L766.20 192.69M781.20 184.03L796.20 192.69M796.20 -32.48L796.20 2.16M796.20 -32.48L811.20 -41.14M796.20 2.16L781.20 10.82M796.20 2.16L811.20 10.82M796.20 19.48L796.20 54.12M796.20 19.48L811.20 10.82M796.20 54.12L781.20 62.78M796.20 54.12L811.20 62.78M796.20 71.44L796.20 106.08M796.20 71.44L811.20 62.78M796.20 106.08L781.20 114.74M796.20 106.08L811.20 114.74M796.20 123.40L796.20 158.04M796.20 123.40L811.20 114.74M796.20 158.04L781.20 166.70M796.20 158.04L811.20 166.70M811.20 -58.46L811.20 -23.82M811.20 -58.46L826.20 -67.12M811.20 -23.82L796.20 -15.16M811.20 -23.82L826.20 -15.16M811.20 -6.50L811.20 28.14M811.20 -6.50L826.20 -15.16M811.20 28.14L796.20 36.80M811.20 28.14L826.20 36.80M811.20 45.46L811.20 80.10M811.20 45.46L826.20 36.80M811.20 80.10L796.20 88.76M811.20 80.10L826.20 88.76M811.20 97.42L811.20 132.06M811.20 97.42L826.20 88.76M811.20 132.06L796.20 140.72M811.20 132.06L826.20 140.72M811.20 149.38L811.20 184.03M811.20 149.38L826.20 140.72M811.20 184.03L796.20 192.69M811.20 184.03L826.20 192.69M826.20 -32.48L826.20 2.16M826.20 -32.48L841.20 -41.14M826.20 2.16L811.20 10.82M826.20 2.16L841.20 10.82M826.20 19.48L826.20 54.12M826.20 19.48L841.20 10.82M826.20 54.12L811.20 62.78M826.20 54.12L841.20 62.78M826.20 71.44L826.20 106.08M826.20 71.44L841.20 62.78M826.20 106.08L811.20 114.74M826.20 106.08L841.20 114.74M826.20 123.40L826.20 158.04M826.20 123.40L841.20 114.74M826.20 158.04L811.20 166.70M826.20 158.04L841.20 166.70M841.20 -58.46L841.20 -23.82M841.20 -58.46L856.20 -67.12M841.20 -23.82L826.20 -15.16M841.20 -23.82L856.20 -15.16M841.20 -6.50L841.20 28.14M841.20 -6.50L856.20 -15.16M841.20 28.14L826.20 36.80M841.20 28.14L856.20 36.80M841.20 45.46L841.20 80.10M841.20 45.46L856.20 36.80M841.20 80.10L826.20 88.76M841.20 80.10L856.20 88.76M841.20 97.42L841.20 132.06M841.20 97.42L856.20 88.76M841.20 132.06L826.20 140.72M841.20 132.06L856.20 140.72M841.20 149.38L841.20 184.03M841.20 149.38L856.20 140.72M841.20 184.03L826.20 192.69M841.20 184.03L856.20 192.69M856.20 -32.48L856.20 2.16M856.20 -32.48L871.20 -41.14M856.20 2.16L841.20 10.82M856.20 2.16L871.20 10.82M856.20 19.48L856.20 54.12M856.20 19.48L871.20 10.82M856.20 54.12L841.20 62.78M856.20 54.12L871.20 62.78M856.20 71.44L856.20 106.08M856.20 71.44L871.20 62.78M856.20 106.08L841.20 114.74M856.20 106.08L871.20 114.74M856.20 123.40L856.20 158.04M856.20 123.40L871.20 114.74M856.20 158.04L841.20 166.70M856.20 158.04L871.20 166.70M871.20 -58.46L871.20 -23.82M871.20 -58.46L886.20 -67.12M871.20 -23.82L856.20 -15.16M871.20 -23.82L886.20 -15.16M871.20 -6.50L871.20 28.14M871.20 -6.50L886.20 -15.16M871.20 28.14L856.20 36.80M871.20 28.14L886.20 36.80M871.20 45.46L871.20 80.10M871.20 45.46L886.20 36.80M871.20 80.10L856.20 88.76M871.20 80.10L886.20 88.76M871.20 97.42L871.20 132.06M871.20 97.42L886.20 88.76M871.20 132.06L856.20 140.72M871.20 132.06L886.20 140.72M871.20 149.38L871.20 184.03M871.20 149.38L886.20 140.72M871.20 184.03L856.20 192.69M871.20 184.03L886.20 192.69M886.20 -32.48L886.20 2.16M886.20 -32.48L901.20 -41.14M886.20 2.16L871.20 10.82M886.20 2.16L901.20 10.82M886.20 19.48L886.20 54.12M886.20 19.48L901.20 10.82M886.20 54.12L871.20 62.78M886.20 54.12L901.20 62.78M886.20 71.44L886.20 106.08M886.20 71.44L901.20 62.78M886.20 106.08L871.20 114.74M886.20 106.08L901.20 114.74M886.20 123.40L886.20 158.04M886.20 123.40L901.20 114.74M886.20 158.04L871.20 166.70M886.20 158.04L901.20 166.70M901.20 -58.46L901.20 -23.82M901.20 -58.46L916.20 -67.12M901.20 -23.82L886.20 -15.16M901.20 -23.82L916.20 -15.16M901.20 -6.50L901.20 28.14M901.20 -6.50L916.20 -15.16M901.20 28.14L886.20 36.80M901.20 28.14L916.20 36.80M901.20 45.46L901.20 80.10M901.20 45.46L916.20 36.80M901.20 80.10L886.20 88.76M901.20 80.10L916.20 88.76M901.20 97.42L901.20 132.06M901.20 97.42L916.20 88.76M901.20 132.06L886.20 140.72M901.20 132.06L916.20 140.72M901.20 149.38L901.20 184.03M901.20 149.38L916.20 140.72M901.20 184.03L886.20 192.69M901.20 184.03L916.20 192.69M916.20 -32.48L916.20 2.16M916.20 -32.48L931.20 -41.14M916.20 2.16L901.20 10.82M916.20 2.16L931.20 10.82M916.20 19.48L916.20 54.12M916.20 19.48L931.20 10.82M916.20 54.12L901.20 62.78M916.20 54.12L931.20 62.78M916.20 71.44L916.20 106.08M916.20 71.44L931.20 62.78M916.20 106.08L901.20 114.74M916.20 106.08L931.20 114.74M916.20 123.40L916.20 158.04M916.20 123.40L931.20 114.74M916.20 158.04L901.20 166.70M916.20 158.04L931.20 166.70M931.20 -58.46L931.20 -23.82M931.20 -58.46L946.20 -67.12M931.20 -23.82L916.20 -15.16M931.20 -23.82L946.20 -15.16M931.20 -6.50L931.20 28.14M931.20 -6.50L946.20 -15.16M931.20 28.14L916.20 36.80M931.20 28.14L946.20 36.80M931.20 45.46L931.20 80.10M931.20 45.46L946.20 36.80M931.20 80.10L916.20 88.76M931.20 80.10L946.20 88.76M931.20 97.42L931.20 132.06M931.20 97.42L946.20 88.76M931.20 132.06L916.20 140.72M931.20 132.06L946.20 140.72M931.20 149.38L931.20 184.03M931.20 149.38L946.20 140.72M931.20 184.03L916.20 192.69M931.20 184.03L946.20 192.69M946.20 -32.48L946.20 2.16M946.20 -32.48L961.20 -41.14M946.20 2.16L931.20 10.82M946.20 2.16L961.20 10.82M946.20 19.48L946.20 54.12M946.20 19.48L961.20 10.82M946.20 54.12L931.20 62.78M946.20 54.12L961.20 62.78M946.20 71.44L946.20 106.08M946.20 71.44L961.20 62.78M946.20 106.08L931.20 114.74M946.20 106.08L961.20 114.74M946.20 123.40L946.20 158.04M946.20 123.40L961.20 114.74M946.20 158.04L931.20 166.70M946.20 158.04L961.20 166.70M961.20 -58.46L961.20 -23.82M961.20 -58.46L976.20 -67.12M961.20 -23.82L946.20 -15.16M961.20 -23.82L976.20 -15.16M961.20 -6.50L961.20 28.14M961.20 -6.50L976.20 -15.16M961.20 28.14L946.20 36.80M961.20 28.14L976.20 36.80M961.20 45.46L961.20 80.10M961.20 45.46L976.20 36.80M961.20 80.10L946.20 88.76M961.20 80.10L976.20 88.76M961.20 97.42L961.20 132.06M961.20 97.42L976.20 88.76M961.20 132.06L946.20 140.72M961.20 132.06L976.20 140.72M961.20 149.38L961.20 184.03M961.20 149.38L976.20 140.72M961.20 184.03L946.20 192.69M961.20 184.03L976.20 192.69M976.20 -32.48L976.20 2.16M976.20 -32.48L991.20 -41.14M976.20 2.16L961.20 10.82M976.20 2.16L991.20 10.82M976.20 19.48L976.20 54.12M976.20 19.48L991.20 10.82M976.20 54.12L961.20 62.78M976.20 54.12L991.20 62.78M976.20 71.44L976.20 106.08M976.20 71.44L991.20 62.78M976.20 106.08L961.20 114.74M976.20 106.08L991.20 114.74M976.20 123.40L976.20 158.04M976.20 123.40L991.20 114.74M976.20 158.04L961.20 166.70M976.20 158.04L991.20 166.70M991.20 -58.46L991.20 -23.82M991.20 -58.46L1006.20 -67.12M991.20 -23.82L976.20 -15.16M991.20 -23.82L1006.20 -15.16M991.20 -6.50L991.20 28.14M991.20 -6.50L1006.20 -15.16M991.20 28.14L976.20 36.80M991.20 28.14L1006.20 36.80M991.20 45.46L991.20 80.10M991.20 45.46L1006.20 36.80M991.20 80.10L976.20 88.76M991.20 80.10L1006.20 88.76M991.20 97.42L991.20 132.06M991.20 97.42L1006.20 88.76M991.20 132.06L976.20 140.72M991.20 132.06L1006.20 140.72M991.20 149.38L991.20 184.03M991.20 149.38L1006.20 140.72M991.20 184.03L976.20 192.69M991.20 184.03L1006.20 192.69M1006.20 -32.48L1006.20 2.16M1006.20 -32.48L1021.20 -41.14M1006.20 2.16L991.20 10.82M1006.20 2.16L1021.20 10.82M1006.20 19.48L1006.20 54.12M1006.20 19.48L1021.20 10.82M1006.20 54.12L991.20 62.78M1006.20 54.12L1021.20 62.78M1006.20 71.44L1006.20 106.08M1006.20 71.44L1021.20 62.78M1006.20 106.08L991.20 114.74M1006.20 106.08L1021.20 114.74M1006.20 123.40L1006.20 158.04M1006.20 123.40L1021.20 114.74M1006.20 158.04L991.20 166.70M1006.20 158.04L1021.20 166.70M1021.20 -58.46L1021.20 -23.82M1021.20 -58.46L1036.20 -67.12M1021.20 -23.82L1006.20 -15.16M1021.20 -23.82L1036.20 -15.16M1021.20 -6.50L1021.20 28.14M1021.20 -6.50L1036.20 -15.16M1021.20 28.14L1006.20 36.80M1021.20 28.14L1036.20 36.80M1021.20 45.46L1021.20 80.10M1021.20 45.46L1036.20 36.80M1021.20 80.10L1006.20 88.76M1021.20 80.10L1036.20 88.76M1021.20 97.42L1021.20 132.06M1021.20 97.42L1036.20 88.76M1021.20 132.06L1006.20 140.72M1021.20 132.06L1036.20 140.72M1021.20 149.38L1021.20 184.03M1021.20 149.38L1036.20 140.72M1021.20 184.03L1006.20 192.69M1021.20 184.03L1036.20 192.69M1036.20 -32.48L1036.20 2.16M1036.20 -32.48L1051.20 -41.14M1036.20 2.16L1021.20 10.82M1036.20 2.16L1051.20 10.82M1036.20 19.48L1036.20 54.12M1036.20 19.48L1051.20 10.82M1036.20 54.12L1021.20 62.78M1036.20 54.12L1051.20 62.78M1036.20 71.44L1036.20 106.08M1036.20 71.44L1051.20 62.78M1036.20 106.08L1021.20 114.74M1036.20 106.08L1051.20 114.74M1036.20 123.40L1036.20 158.04M1036.20 123.40L1051.20 114.74M1036.20 158.04L1021.20 166.70M1036.20 158.04L1051.20 166.70M1051.20 -58.46L1051.20 -23.82M1051.20 -58.46L1066.20 -67.12M1051.20 -23.82L1036.20 -15.16M1051.20 -23.82L1066.20 -15.16M1051.20 -6.50L1051.20 28.14M1051.20 -6.50L1066.20 -15.16M1051.20 28.14L1036.20 36.80M1051.20 28.14L1066.20 36.80M1051.20 45.46L1051.20 80.10M1051.20 45.46L1066.20 36.80M1051.20 80.10L1036.20 88.76M1051.20 80.10L1066.20 88.76M1051.20 97.42L1051.20 132.06M1051.20 97.42L1066.20 88.76M1051.20 132.06L1036.20 140.72M1051.20 132.06L1066.20 140.72M1051.20 149.38L1051.20 184.03M1051.20 149.38L1066.20 140.72M1051.20 184.03L1036.20 192.69M1051.20 184.03L1066.20 192.69M1066.20 -32.48L1066.20 2.16M1066.20 -32.48L1081.20 -41.14M1066.20 2.16L1051.20 10.82M1066.20 2.16L1081.20 10.82M1066.20 19.48L1066.20 54.12M1066.20 19.48L1081.20 10.82M1066.20 54.12L1051.20 62.78M1066.20 54.12L1081.20 62.78M1066.20 71.44L1066.20 106.08M1066.20 71.44L1081.20 62.78M1066.20 106.08L1051.20 114.74M1066.20 106.08L1081.20 114.74M1066.20 123.40L1066.20 158.04M1066.20 123.40L1081.20 114.74M1066.20 158.04L1051.20 166.70M1066.20 158.04L1081.20 166.70M1081.20 -58.46L1081.20 -23.82M1081.20 -58.46L1096.20 -67.12M1081.20 -23.82L1066.20 -15.16M1081.20 -23.82L1096.20 -15.16M1081.20 -6.50L1081.20 28.14M1081.20 -6.50L1096.20 -15.16M1081.20 28.14L1066.20 36.80M1081.20 28.14L1096.20 36.80M1081.20 45.46L1081.20 80.10M1081.20 45.46L1096.20 36.80M1081.20 80.10L1066.20 88.76M1081.20 80.10L1096.20 88.76M1081.20 97.42L1081.20 132.06M1081.20 97.42L1096.20 88.76M1081.20 132.06L1066.20 140.72M1081.20 132.06L1096.20 140.72M1081.20 149.38L1081.20 184.03M1081.20 149.38L1096.20 140.72M1081.20 184.03L1066.20 192.69M1081.20 184.03L1096.20 192.69M1096.20 -32.48L1096.20 2.16M1096.20 -32.48L1111.20 -41.14M1096.20 2.16L1081.20 10.82M1096.20 2.16L1111.20 10.82M1096.20 19.48L1096.20 54.12M1096.20 19.48L1111.20 10.82M1096.20 54.12L1081.20 62.78M1096.20 54.12L1111.20 62.78M1096.20 71.44L1096.20 106.08M1096.20 71.44L1111.20 62.78M1096.20 106.08L1081.20 114.74M1096.20 106.08L1111.20 114.74M1096.20 123.40L1096.20 158.04M1096.20 123.40L1111.20 114.74M1096.20 158.04L1081.20 166.70M1096.20 158.04L1111.20 166.70M1111.20 -58.46L1111.20 -23.82M1111.20 -58.46L1126.20 -67.12M1111.20 -23.82L1096.20 -15.16M1111.20 -23.82L1126.20 -15.16M1111.20 -6.50L1111.20 28.14M1111.20 -6.50L1126.20 -15.16M1111.20 28.14L1096.20 36.80M1111.20 28.14L1126.20 36.80M1111.20 45.46L1111.20 80.10M1111.20 45.46L1126.20 36.80M1111.20 80.10L1096.20 88.76M1111.20 80.10L1126.20 88.76M1111.20 97.42L1111.20 132.06M1111.20 97.42L1126.20 88.76M1111.20 132.06L1096.20 140.72M1111.20 132.06L1126.20 140.72M1111.20 149.38L1111.20 184.03M1111.20 149.38L1126.20 140.72M1111.20 184.03L1096.20 192.69M1111.20 184.03L1126.20 192.69M1126.20 -32.48L1126.20 2.16M1126.20 -32.48L1141.20 -41.14M1126.20 2.16L1111.20 10.82M1126.20 2.16L1141.20 10.82M1126.20 19.48L1126.20 54.12M1126.20 19.48L1141.20 10.82M1126.20 54.12L1111.20 62.78M1126.20 54.12L1141.20 62.78M1126.20 71.44L1126.20 106.08M1126.20 71.44L1141.20 62.78M1126.20 106.08L1111.20 114.74M1126.20 106.08L1141.20 114.74M1126.20 123.40L1126.20 158.04M1126.20 123.40L1141.20 114.74M1126.20 158.04L1111.20 166.70M1126.20 158.04L1141.20 166.70M1141.20 -58.46L1141.20 -23.82M1141.20 -58.46L1156.20 -67.12M1141.20 -23.82L1126.20 -15.16M1141.20 -23.82L1156.20 -15.16M1141.20 -6.50L1141.20 28.14M1141.20 -6.50L1156.20 -15.16M1141.20 28.14L1126.20 36.80M1141.20 28.14L1156.20 36.80M1141.20 45.46L1141.20 80.10M1141.20 45.46L1156.20 36.80M1141.20 80.10L1126.20 88.76M1141.20 80.10L1156.20 88.76M1141.20 97.42L1141.20 132.06M1141.20 97.42L1156.20 88.76M1141.20 132.06L1126.20 140.72M1141.20 132.06L1156.20 140.72M1141.20 149.38L1141.20 184.03M1141.20 149.38L1156.20 140.72M1141.20 184.03L1126.20 192.69M1141.20 184.03L1156.20 192.69M1156.20 -32.48L1156.20 2.16M1156.20 -32.48L1171.20 -41.14M1156.20 2.16L1141.20 10.82M1156.20 2.16L1171.20 10.82M1156.20 19.48L1156.20 54.12M1156.20 19.48L1171.20 10.82M1156.20 54.12L1141.20 62.78M1156.20 54.12L1171.20 62.78M1156.20 71.44L1156.20 106.08M1156.20 71.44L1171.20 62.78M1156.20 106.08L1141.20 114.74M1156.20 106.08L1171.20 114.74M1156.20 123.40L1156.20 158.04M1156.20 123.40L1171.20 114.74M1156.20 158.04L1141.20 166.70M1156.20 158.04L1171.20 166.70M1171.20 -58.46L1171.20 -23.82M1171.20 -58.46L1186.20 -67.12M1171.20 -23.82L1156.20 -15.16M1171.20 -23.82L1186.20 -15.16M1171.20 -6.50L1171.20 28.14M1171.20 -6.50L1186.20 -15.16M1171.20 28.14L1156.20 36.80M1171.20 28.14L1186.20 36.80M1171.20 45.46L1171.20 80.10M1171.20 45.46L1186.20 36.80M1171.20 80.10L1156.20 88.76M1171.20 80.10L1186.20 88.76M1171.20 97.42L1171.20 132.06M1171.20 97.42L1186.20 88.76M1171.20 132.06L1156.20 140.72M1171.20 132.06L1186.20 140.72M1171.20 149.38L1171.20 184.03M1171.20 149.38L1186.20 140.72M1171.20 184.03L1156.20 192.69M1171.20 184.03L1186.20 192.69M1186.20 -32.48L1186.20 2.16M1186.20 -32.48L1201.20 -41.14M1186.20 2.16L1171.20 10.82M1186.20 2.16L1201.20 10.82M1186.20 19.48L1186.20 54.12M1186.20 19.48L1201.20 10.82M1186.20 54.12L1171.20 62.78M1186.20 54.12L1201.20 62.78M1186.20 71.44L1186.20 106.08M1186.20 71.44L1201.20 62.78M1186.20 106.08L1171.20 114.74M1186.20 106.08L1201.20 114.74M1186.20 123.40L1186.20 158.04M1186.20 123.40L1201.20 114.74M1186.20 158.04L1171.20 166.70M1186.20 158.04L1201.20 166.70M1201.20 -58.46L1201.20 -23.82M1201.20 -58.46L1216.20 -67.12M1201.20 -23.82L1186.20 -15.16M1201.20 -23.82L1216.20 -15.16M1201.20 -6.50L1201.20 28.14M1201.20 -6.50L1216.20 -15.16M1201.20 28.14L1186.20 36.80M1201.20 28.14L1216.20 36.80M1201.20 45.46L1201.20 80.10M1201.20 45.46L1216.20 36.80M1201.20 80.10L1186.20 88.76M1201.20 80.10L1216.20 88.76M1201.20 97.42L1201.20 132.06M1201.20 97.42L1216.20 88.76M1201.20 132.06L1186.20 140.72M1201.20 132.06L1216.20 140.72M1201.20 149.38L1201.20 184.03M1201.20 149.38L1216.20 140.72M1201.20 184.03L1186.20 192.69M1201.20 184.03L1216.20 192.69M1216.20 -32.48L1216.20 2.16M1216.20 -32.48L1231.20 -41.14M1216.20 2.16L1201.20 10.82M1216.20 2.16L1231.20 10.82M1216.20 19.48L1216.20 54.12M1216.20 19.48L1231.20 10.82M1216.20 54.12L1201.20 62.78M1216.20 54.12L1231.20 62.78M1216.20 71.44L1216.20 106.08M1216.20 71.44L1231.20 62.78M1216.20 106.08L1201.20 114.74M1216.20 106.08L1231.20 114.74M1216.20 123.40L1216.20 158.04M1216.20 123.40L1231.20 114.74M1216.20 158.04L1201.20 166.70M1216.20 158.04L1231.20 166.70M1231.20 -58.46L1231.20 -23.82M1231.20 -58.46L1246.20 -67.12M1231.20 -23.82L1216.20 -15.16M1231.20 -23.82L1246.20 -15.16M1231.20 -6.50L1231.20 28.14M1231.20 -6.50L1246.20 -15.16M1231.20 28.14L1216.20 36.80M1231.20 28.14L1246.20 36.80M1231.20 45.46L1231.20 80.10M1231.20 45.46L1246.20 36.80M1231.20 80.10L1216.20 88.76M1231.20 80.10L1246.20 88.76M1231.20 97.42L1231.20 132.06M1231.20 97.42L1246.20 88.76M1231.20 132.06L1216.20 140.72M1231.20 132.06L1246.20 140.72M1231.20 149.38L1231.20 184.03M1231.20 149.38L1246.20 140.72M1231.20 184.03L1216.20 192.69M1231.20 184.03L1246.20 192.69M1246.20 -32.48L1246.20 2.16M1246.20 -32.48L1261.20 -41.14M1246.20 2.16L1231.20 10.82M1246.20 2.16L1261.20 10.82M1246.20 19.48L1246.20 54.12M1246.20 19.48L1261.20 10.82M1246.20 54.12L1231.20 62.78M1246.20 54.12L1261.20 62.78M1246.20 71.44L1246.20 106.08M1246.20 71.44L1261.20 62.78M1246.20 106.08L1231.20 114.74M1246.20 106.08L1261.20 114.74M1246.20 123.40L1246.20 158.04M1246.20 123.40L1261.20 114.74M1246.20 158.04L1231.20 166.70M1246.20 158.04L1261.20 166.70M1261.20 -58.46L1261.20 -23.82M1261.20 -58.46L1276.20 -67.12M1261.20 -23.82L1246.20 -15.16M1261.20 -23.82L1276.20 -15.16M1261.20 -6.50L1261.20 28.14M1261.20 -6.50L1276.20 -15.16M1261.20 28.14L1246.20 36.80M1261.20 28.14L1276.20 36.80M1261.20 45.46L1261.20 80.10M1261.20 45.46L1276.20 36.80M1261.20 80.10L1246.20 88.76M1261.20 80.10L1276.20 88.76M1261.20 97.42L1261.20 132.06M1261.20 97.42L1276.20 88.76M1261.20 132.06L1246.20 140.72M1261.20 132.06L1276.20 140.72M1261.20 149.38L1261.20 184.03M1261.20 149.38L1276.20 140.72M1261.20 184.03L1246.20 192.69M1261.20 184.03L1276.20 192.69M1276.20 -32.48L1276.20 2.16M1276.20 -32.48L1291.20 -41.14M1276.20 2.16L1261.20 10.82M1276.20 2.16L1291.20 10.82M1276.20 19.48L1276.20 54.12M1276.20 19.48L1291.20 10.82M1276.20 54.12L1261.20 62.78M1276.20 54.12L1291.20 62.78M1276.20 71.44L1276.20 106.08M1276.20 71.44L1291.20 62.78M1276.20 106.08L1261.20 114.74M1276.20 106.08L1291.20 114.74M1276.20 123.40L1276.20 158.04M1276.20 123.40L1291.20 114.74M1276.20 158.04L1261.20 166.70M1276.20 158.04L1291.20 166.70M1291.20 -58.46L1291.20 -23.82M1291.20 -58.46L1306.20 -67.12M1291.20 -23.82L1276.20 -15.16M1291.20 -23.82L1306.20 -15.16M1291.20 -6.50L1291.20 28.14M1291.20 -6.50L1306.20 -15.16M1291.20 28.14L1276.20 36.80M1291.20 28.14L1306.20 36.80M1291.20 45.46L1291.20 80.10M1291.20 45.46L1306.20 36.80M1291.20 80.10L1276.20 88.76M1291.20 80.10L1306.20 88.76M1291.20 97.42L1291.20 132.06M1291.20 97.42L1306.20 88.76M1291.20 132.06L1276.20 140.72M1291.20 132.06L1306.20 140.72M1291.20 149.38L1291.20 184.03M1291.20 149.38L1306.20 140.72M1291.20 184.03L1276.20 192.69M1291.20 184.03L1306.20 192.69M1306.20 -32.48L1306.20 2.16M1306.20 -32.48L1321.20 -41.14M1306.20 2.16L1291.20 10.82M1306.20 2.16L1321.20 10.82M1306.20 19.48L1306.20 54.12M1306.20 19.48L1321.20 10.82M1306.20 54.12L1291.20 62.78M1306.20 54.12L1321.20 62.78M1306.20 71.44L1306.20 106.08M1306.20 71.44L1321.20 62.78M1306.20 106.08L1291.20 114.74M1306.20 106.08L1321.20 114.74M1306.20 123.40L1306.20 158.04M1306.20 123.40L1321.20 114.74M1306.20 158.04L1291.20 166.70M1306.20 158.04L1321.20 166.70M1321.20 -58.46L1321.20 -23.82M1321.20 -58.46L1336.20 -67.12M1321.20 -23.82L1306.20 -15.16M1321.20 -23.82L1336.20 -15.16M1321.20 -6.50L1321.20 28.14M1321.20 -6.50L1336.20 -15.16M1321.20 28.14L1306.20 36.80M1321.20 28.14L1336.20 36.80M1321.20 45.46L1321.20 80.10M1321.20 45.46L1336.20 36.80M1321.20 80.10L1306.20 88.76M1321.20 80.10L1336.20 88.76M1321.20 97.42L1321.20 132.06M1321.20 97.42L1336.20 88.76M1321.20 132.06L1306.20 140.72M1321.20 132.06L1336.20 140.72M1321.20 149.38L1321.20 184.03M1321.20 149.38L1336.20 140.72M1321.20 184.03L1306.20 192.69M1321.20 184.03L1336.20 192.69M1336.20 -32.48L1336.20 2.16M1336.20 -32.48L1351.20 -41.14M1336.20 2.16L1321.20 10.82M1336.20 2.16L1351.20 10.82M1336.20 19.48L1336.20 54.12M1336.20 19.48L1351.20 10.82M1336.20 54.12L1321.20 62.78M1336.20 54.12L1351.20 62.78M1336.20 71.44L1336.20 106.08M1336.20 71.44L1351.20 62.78M1336.20 106.08L1321.20 114.74M1336.20 106.08L1351.20 114.74M1336.20 123.40L1336.20 158.04M1336.20 123.40L1351.20 114.74M1336.20 158.04L1321.20 166.70M1336.20 158.04L1351.20 166.70M1351.20 -58.46L1351.20 -23.82M1351.20 -58.46L1366.20 -67.12M1351.20 -23.82L1336.20 -15.16M1351.20 -23.82L1366.20 -15.16M1351.20 -6.50L1351.20 28.14M1351.20 -6.50L1366.20 -15.16M1351.20 28.14L1336.20 36.80M1351.20 28.14L1366.20 36.80M1351.20 45.46L1351.20 80.10M1351.20 45.46L1366.20 36.80M1351.20 80.10L1336.20 88.76M1351.20 80.10L1366.20 88.76M1351.20 97.42L1351.20 132.06M1351.20 97.42L1366.20 88.76M1351.20 132.06L1336.20 140.72M1351.20 132.06L1366.20 140.72M1351.20 149.38L1351.20 184.03M1351.20 149.38L1366.20 140.72M1351.20 184.03L1336.20 192.69M1351.20 184.03L1366.20 192.69M1366.20 -32.48L1366.20 2.16M1366.20 -32.48L1381.20 -41.14M1366.20 2.16L1351.20 10.82M1366.20 2.16L1381.20 10.82M1366.20 19.48L1366.20 54.12M1366.20 19.48L1381.20 10.82M1366.20 54.12L1351.20 62.78M1366.20 54.12L1381.20 62.78M1366.20 71.44L1366.20 106.08M1366.20 71.44L1381.20 62.78M1366.20 106.08L1351.20 114.74M1366.20 106.08L1381.20 114.74M1366.20 123.40L1366.20 158.04M1366.20 123.40L1381.20 114.74M1366.20 158.04L1351.20 166.70M1366.20 158.04L1381.20 166.70M1381.20 -58.46L1381.20 -23.82M1381.20 -58.46L1396.20 -67.12M1381.20 -23.82L1366.20 -15.16M1381.20 -23.82L1396.20 -15.16M1381.20 -6.50L1381.20 28.14M1381.20 -6.50L1396.20 -15.16M1381.20 28.14L1366.20 36.80M1381.20 28.14L1396.20 36.80M1381.20 45.46L1381.20 80.10M1381.20 45.46L1396.20 36.80M1381.20 80.10L1366.20 88.76M1381.20 80.10L1396.20 88.76M1381.20 97.42L1381.20 132.06M1381.20 97.42L1396.20 88.76M1381.20 132.06L1366.20 140.72M1381.20 132.06L1396.20 140.72M1381.20 149.38L1381.20 184.03M1381.20 149.38L1396.20 140.72M1381.20 184.03L1366.20 192.69M1381.20 184.03L1396.20 192.69M1396.20 -32.48L1396.20 2.16M1396.20 -32.48L1411.20 -41.14M1396.20 2.16L1381.20 10.82M1396.20 2.16L1411.20 10.82M1396.20 19.48L1396.20 54.12M1396.20 19.48L1411.20 10.82M1396.20 54.12L1381.20 62.78M1396.20 54.12L1411.20 62.78M1396.20 71.44L1396.20 106.08M1396.20 71.44L1411.20 62.78M1396.20 106.08L1381.20 114.74M1396.20 106.08L1411.20 114.74M1396.20 123.40L1396.20 158.04M1396.20 123.40L1411.20 114.74M1396.20 158.04L1381.20 166.70M1396.20 158.04L1411.20 166.70M1411.20 -58.46L1411.20 -23.82M1411.20 -58.46L1426.20 -67.12M1411.20 -23.82L1396.20 -15.16M1411.20 -23.82L1426.20 -15.16M1411.20 -6.50L1411.20 28.14M1411.20 -6.50L1426.20 -15.16M1411.20 28.14L1396.20 36.80M1411.20 28.14L1426.20 36.80M1411.20 45.46L1411.20 80.10M1411.20 45.46L1426.20 36.80M1411.20 80.10L1396.20 88.76M1411.20 80.10L1426.20 88.76M1411.20 97.42L1411.20 132.06M1411.20 97.42L1426.20 88.76M1411.20 132.06L1396.20 140.72M1411.20 132.06L1426.20 140.72M1411.20 149.38L1411.20 184.03M1411.20 149.38L1426.20 140.72M1411.20 184.03L1396.20 192.69M1411.20 184.03L1426.20 192.69M1426.20 -32.48L1426.20 2.16M1426.20 -32.48L1441.20 -41.14M1426.20 2.16L1411.20 10.82M1426.20 2.16L1441.20 10.82M1426.20 19.48L1426.20 54.12M1426.20 19.48L1441.20 10.82M1426.20 54.12L1411.20 62.78M1426.20 54.12L1441.20 62.78M1426.20 71.44L1426.20 106.08M1426.20 71.44L1441.20 62.78M1426.20 106.08L1411.20 114.74M1426.20 106.08L1441.20 114.74M1426.20 123.40L1426.20 158.04M1426.20 123.40L1441.20 114.74M1426.20 158.04L1411.20 166.70M1426.20 158.04L1441.20 166.70M1441.20 -58.46L1441.20 -23.82M1441.20 -58.46L1456.20 -67.12M1441.20 -23.82L1426.20 -15.16M1441.20 -23.82L1456.20 -15.16M1441.20 -6.50L1441.20 28.14M1441.20 -6.50L1456.20 -15.16M1441.20 28.14L1426.20 36.80M1441.20 28.14L1456.20 36.80M1441.20 45.46L1441.20 80.10M1441.20 45.46L1456.20 36.80M1441.20 80.10L1426.20 88.76M1441.20 80.10L1456.20 88.76M1441.20 97.42L1441.20 132.06M1441.20 97.42L1456.20 88.76M1441.20 132.06L1426.20 140.72M1441.20 132.06L1456.20 140.72M1441.20 149.38L1441.20 184.03M1441.20 149.38L1456.20 140.72M1441.20 184.03L1426.20 192.69M1441.20 184.03L1456.20 192.69M1456.20 -32.48L1456.20 2.16M1456.20 -32.48L1471.20 -41.14M1456.20 2.16L1441.20 10.82M1456.20 2.16L1471.20 10.82M1456.20 19.48L1456.20 54.12M1456.20 19.48L1471.20 10.82M1456.20 54.12L1441.20 62.78M1456.20 54.12L1471.20 62.78M1456.20 71.44L1456.20 106.08M1456.20 71.44L1471.20 62.78M1456.20 106.08L1441.20 114.74M1456.20 106.08L1471.20 114.74M1456.20 123.40L1456.20 158.04M1456.20 123.40L1471.20 114.74M1456.20 158.04L1441.20 166.70M1456.20 158.04L1471.20 166.70M1471.20 -58.46L1471.20 -23.82M1471.20 -58.46L1486.20 -67.12M1471.20 -23.82L1456.20 -15.16M1471.20 -23.82L1486.20 -15.16M1471.20 -6.50L1471.20 28.14M1471.20 -6.50L1486.20 -15.16M1471.20 28.14L1456.20 36.80M1471.20 28.14L1486.20 36.80M1471.20 45.46L1471.20 80.10M1471.20 45.46L1486.20 36.80M1471.20 80.10L1456.20 88.76M1471.20 80.10L1486.20 88.76M1471.20 97.42L1471.20 132.06M1471.20 97.42L1486.20 88.76M1471.20 132.06L1456.20 140.72M1471.20 132.06L1486.20 140.72M1471.20 149.38L1471.20 184.03M1471.20 149.38L1486.20 140.72M1471.20 184.03L1456.20 192.69M1471.20 184.03L1486.20 192.69M1486.20 -32.48L1486.20 2.16M1486.20 -32.48L1501.20 -41.14M1486.20 2.16L1471.20 10.82M1486.20 2.16L1501.20 10.82M1486.20 19.48L1486.20 54.12M1486.20 19.48L1501.20 10.82M1486.20 54.12L1471.20 62.78M1486.20 54.12L1501.20 62.78M1486.20 71.44L1486.20 106.08M1486.20 71.44L1501.20 62.78M1486.20 106.08L1471.20 114.74M1486.20 106.08L1501.20 114.74M1486.20 123.40L1486.20 158.04M1486.20 123.40L1501.20 114.74M1486.20 158.04L1471.20 166.70M1486.20 158.04L1501.20 166.70M1501.20 -58.46L1501.20 -23.82M1501.20 -58.46L1516.20 -67.12M1501.20 -23.82L1486.20 -15.16M1501.20 -23.82L1516.20 -15.16M1501.20 -6.50L1501.20 28.14M1501.20 -6.50L1516.20 -15.16M1501.20 28.14L1486.20 36.80M1501.20 28.14L1516.20 36.80M1501.20 45.46L1501.20 80.10M1501.20 45.46L1516.20 36.80M1501.20 80.10L1486.20 88.76M1501.20 80.10L1516.20 88.76M1501.20 97.42L1501.20 132.06M1501.20 97.42L1516.20 88.76M1501.20 132.06L1486.20 140.72M1501.20 132.06L1516.20 140.72M1501.20 149.38L1501.20 184.03M1501.20 149.38L1516.20 140.72M1501.20 184.03L1486.20 192.69M1501.20 184.03L1516.20 192.69M1516.20 -32.48L1516.20 2.16M1516.20 -32.48L1531.20 -41.14M1516.20 2.16L1501.20 10.82M1516.20 2.16L1531.20 10.82M1516.20 19.48L1516.20 54.12M1516.20 19.48L1531.20 10.82M1516.20 54.12L1501.20 62.78M1516.20 54.12L1531.20 62.78M1516.20 71.44L1516.20 106.08M1516.20 71.44L1531.20 62.78M1516.20 106.08L1501.20 114.74M1516.20 106.08L1531.20 114.74M1516.20 123.40L1516.20 158.04M1516.20 123.40L1531.20 114.74M1516.20 158.04L1501.20 166.70M1516.20 158.04L1531.20 166.70M1531.20 -58.46L1531.20 -23.82M1531.20 -58.46L1546.20 -67.12M1531.20 -23.82L1516.20 -15.16M1531.20 -23.82L1546.20 -15.16M1531.20 -6.50L1531.20 28.14M1531.20 -6.50L1546.20 -15.16M1531.20 28.14L1516.20 36.80M1531.20 28.14L1546.20 36.80M1531.20 45.46L1531.20 80.10M1531.20 45.46L1546.20 36.80M1531.20 80.10L1516.20 88.76M1531.20 80.10L1546.20 88.76M1531.20 97.42L1531.20 132.06M1531.20 97.42L1546.20 88.76M1531.20 132.06L1516.20 140.72M1531.20 132.06L1546.20 140.72M1531.20 149.38L1531.20 184.03M1531.20 149.38L1546.20 140.72M1531.20 184.03L1516.20 192.69M1531.20 184.03L1546.20 192.69M1546.20 -32.48L1546.20 2.16M1546.20 -32.48L1561.20 -41.14M1546.20 2.16L1531.20 10.82M1546.20 2.16L1561.20 10.82M1546.20 19.48L1546.20 54.12M1546.20 19.48L1561.20 10.82M1546.20 54.12L1531.20 62.78M1546.20 54.12L1561.20 62.78M1546.20 71.44L1546.20 106.08M1546.20 71.44L1561.20 62.78M1546.20 106.08L1531.20 114.74M1546.20 106.08L1561.20 114.74M1546.20 123.40L1546.20 158.04M1546.20 123.40L1561.20 114.74M1546.20 158.04L1531.20 166.70M1546.20 158.04L1561.20 166.70M1561.20 -58.46L1561.20 -23.82M1561.20 -58.46L1576.20 -67.12M1561.20 -23.82L1546.20 -15.16M1561.20 -23.82L1576.20 -15.16M1561.20 -6.50L1561.20 28.14M1561.20 -6.50L1576.20 -15.16M1561.20 28.14L1546.20 36.80M1561.20 28.14L1576.20 36.80M1561.20 45.46L1561.20 80.10M1561.20 45.46L1576.20 36.80M1561.20 80.10L1546.20 88.76M1561.20 80.10L1576.20 88.76M1561.20 97.42L1561.20 132.06M1561.20 97.42L1576.20 88.76M1561.20 132.06L1546.20 140.72M1561.20 132.06L1576.20 140.72M1561.20 149.38L1561.20 184.03M1561.20 149.38L1576.20 140.72M1561.20 184.03L1546.20 192.69M1561.20 184.03L1576.20 192.69M1576.20 -32.48L1576.20 2.16M1576.20 -32.48L1591.20 -41.14M1576.20 2.16L1561.20 10.82M1576.20 2.16L1591.20 10.82M1576.20 19.48L1576.20 54.12M1576.20 19.48L1591.20 10.82M1576.20 54.12L1561.20 62.78M1576.20 54.12L1591.20 62.78M1576.20 71.44L1576.20 106.08M1576.20 71.44L1591.20 62.78M1576.20 106.08L1561.20 114.74M1576.20 106.08L1591.20 114.74M1576.20 123.40L1576.20 158.04M1576.20 123.40L1591.20 114.74M1576.20 158.04L1561.20 166.70M1576.20 158.04L1591.20 166.70M1591.20 -58.46L1591.20 -23.82M1591.20 -58.46L1606.20 -67.12M1591.20 -23.82L1576.20 -15.16M1591.20 -23.82L1606.20 -15.16M1591.20 -6.50L1591.20 28.14M1591.20 -6.50L1606.20 -15.16M1591.20 28.14L1576.20 36.80M1591.20 28.14L1606.20 36.80M1591.20 45.46L1591.20 80.10M1591.20 45.46L1606.20 36.80M1591.20 80.10L1576.20 88.76M1591.20 80.10L1606.20 88.76M1591.20 97.42L1591.20 132.06M1591.20 97.42L1606.20 88.76M1591.20 132.06L1576.20 140.72M1591.20 132.06L1606.20 140.72M1591.20 149.38L1591.20 184.03M1591.20 149.38L1606.20 140.72M1591.20 184.03L1576.20 192.69M1591.20 184.03L1606.20 192.69M1606.20 -32.48L1606.20 2.16M1606.20 -32.48L1621.20 -41.14M1606.20 2.16L1591.20 10.82M1606.20 2.16L1621.20 10.82M1606.20 19.48L1606.20 54.12M1606.20 19.48L1621.20 10.82M1606.20 54.12L1591.20 62.78M1606.20 54.12L1621.20 62.78M1606.20 71.44L1606.20 106.08M1606.20 71.44L1621.20 62.78M1606.20 106.08L1591.20 114.74M1606.20 106.08L1621.20 114.74M1606.20 123.40L1606.20 158.04M1606.20 123.40L1621.20 114.74M1606.20 158.04L1591.20 166.70M1606.20 158.04L1621.20 166.70M1621.20 -58.46L1621.20 -23.82M1621.20 -58.46L1636.20 -67.12M1621.20 -23.82L1606.20 -15.16M1621.20 -23.82L1636.20 -15.16M1621.20 -6.50L1621.20 28.14M1621.20 -6.50L1636.20 -15.16M1621.20 28.14L1606.20 36.80M1621.20 28.14L1636.20 36.80M1621.20 45.46L1621.20 80.10M1621.20 45.46L1636.20 36.80M1621.20 80.10L1606.20 88.76M1621.20 80.10L1636.20 88.76M1621.20 97.42L1621.20 132.06M1621.20 97.42L1636.20 88.76M1621.20 132.06L1606.20 140.72M1621.20 132.06L1636.20 140.72M1621.20 149.38L1621.20 184.03M1621.20 149.38L1636.20 140.72M1621.20 184.03L1606.20 192.69M1621.20 184.03L1636.20 192.69M1636.20 -32.48L1636.20 2.16M1636.20 -32.48L1651.20 -41.14M1636.20 2.16L1621.20 10.82M1636.20 2.16L1651.20 10.82M1636.20 19.48L1636.20 54.12M1636.20 19.48L1651.20 10.82M1636.20 54.12L1621.20 62.78M1636.20 54.12L1651.20 62.78M1636.20 71.44L1636.20 106.08M1636.20 71.44L1651.20 62.78M1636.20 106.08L1621.20 114.74M1636.20 106.08L1651.20 114.74M1636.20 123.40L1636.20 158.04M1636.20 123.40L1651.20 114.74M1636.20 158.04L1621.20 166.70M1636.20 158.04L1651.20 166.70M1651.20 -58.46L1651.20 -23.82M1651.20 -58.46L1666.20 -67.12M1651.20 -23.82L1636.20 -15.16M1651.20 -23.82L1666.20 -15.16M1651.20 -6.50L1651.20 28.14M1651.20 -6.50L1666.20 -15.16M1651.20 28.14L1636.20 36.80M1651.20 28.14L1666.20 36.80M1651.20 45.46L1651.20 80.10M1651.20 45.46L1666.20 36.80M1651.20 80.10L1636.20 88.76M1651.20 80.10L1666.20 88.76M1651.20 97.42L1651.20 132.06M1651.20 97.42L1666.20 88.76M1651.20 132.06L1636.20 140.72M1651.20 132.06L1666.20 140.72M1651.20 149.38L1651.20 184.03M1651.20 149.38L1666.20 140.72M1651.20 184.03L1636.20 192.69M1651.20 184.03L1666.20 192.69M1666.20 -32.48L1666.20 2.16M1666.20 -32.48L1681.20 -41.14M1666.20 2.16L1651.20 10.82M1666.20 2.16L1681.20 10.82M1666.20 19.48L1666.20 54.12M1666.20 19.48L1681.20 10.82M1666.20 54.12L1651.20 62.78M1666.20 54.12L1681.20 62.78M1666.20 71.44L1666.20 106.08M1666.20 71.44L1681.20 62.78M1666.20 106.08L1651.20 114.74M1666.20 106.08L1681.20 114.74M1666.20 123.40L1666.20 158.04M1666.20 123.40L1681.20 114.74M1666.20 158.04L1651.20 166.70M1666.20 158.04L1681.20 166.70M1681.20 -58.46L1681.20 -23.82M1681.20 -58.46L1696.20 -67.12M1681.20 -23.82L1666.20 -15.16M1681.20 -23.82L1696.20 -15.16M1681.20 -6.50L1681.20 28.14M1681.20 -6.50L1696.20 -15.16M1681.20 28.14L1666.20 36.80M1681.20 28.14L1696.20 36.80M1681.20 45.46L1681.20 80.10M1681.20 45.46L1696.20 36.80M1681.20 80.10L1666.20 88.76M1681.20 80.10L1696.20 88.76M1681.20 97.42L1681.20 132.06M1681.20 97.42L1696.20 88.76M1681.20 132.06L1666.20 140.72M1681.20 132.06L1696.20 140.72M1681.20 149.38L1681.20 184.03M1681.20 149.38L1696.20 140.72M1681.20 184.03L1666.20 192.69M1681.20 184.03L1696.20 192.69M1696.20 -32.48L1696.20 2.16M1696.20 -32.48L1711.20 -41.14M1696.20 2.16L1681.20 10.82M1696.20 2.16L1711.20 10.82M1696.20 19.48L1696.20 54.12M1696.20 19.48L1711.20 10.82M1696.20 54.12L1681.20 62.78M1696.20 54.12L1711.20 62.78M1696.20 71.44L1696.20 106.08M1696.20 71.44L1711.20 62.78M1696.20 106.08L1681.20 114.74M1696.20 106.08L1711.20 114.74M1696.20 123.40L1696.20 158.04M1696.20 123.40L1711.20 114.74M1696.20 158.04L1681.20 166.70M1696.20 158.04L1711.20 166.70M1711.20 -58.46L1711.20 -23.82M1711.20 -58.46L1726.20 -67.12M1711.20 -23.82L1696.20 -15.16M1711.20 -23.82L1726.20 -15.16M1711.20 -6.50L1711.20 28.14M1711.20 -6.50L1726.20 -15.16M1711.20 28.14L1696.20 36.80M1711.20 28.14L1726.20 36.80M1711.20 45.46L1711.20 80.10M1711.20 45.46L1726.20 36.80M1711.20 80.10L1696.20 88.76M1711.20 80.10L1726.20 88.76M1711.20 97.42L1711.20 132.06M1711.20 97.42L1726.20 88.76M1711.20 132.06L1696.20 140.72M1711.20 132.06L1726.20 140.72M1711.20 149.38L1711.20 184.03M1711.20 149.38L1726.20 140.72M1711.20 184.03L1696.20 192.69M1711.20 184.03L1726.20 192.69M1726.20 -32.48L1726.20 2.16M1726.20 -32.48L1741.20 -41.14M1726.20 2.16L1711.20 10.82M1726.20 2.16L1741.20 10.82M1726.20 19.48L1726.20 54.12M1726.20 19.48L1741.20 10.82M1726.20 54.12L1711.20 62.78M1726.20 54.12L1741.20 62.78M1726.20 71.44L1726.20 106.08M1726.20 71.44L1741.20 62.78M1726.20 106.08L1711.20 114.74M1726.20 106.08L1741.20 114.74M1726.20 123.40L1726.20 158.04M1726.20 123.40L1741.20 114.74M1726.20 158.04L1711.20 166.70M1726.20 158.04L1741.20 166.70M1741.20 -58.46L1741.20 -23.82M1741.20 -58.46L1756.20 -67.12M1741.20 -23.82L1726.20 -15.16M1741.20 -23.82L1756.20 -15.16M1741.20 -6.50L1741.20 28.14M1741.20 -6.50L1756.20 -15.16M1741.20 28.14L1726.20 36.80M1741.20 28.14L1756.20 36.80M1741.20 45.46L1741.20 80.10M1741.20 45.46L1756.20 36.80M1741.20 80.10L1726.20 88.76M1741.20 80.10L1756.20 88.76M1741.20 97.42L1741.20 132.06M1741.20 97.42L1756.20 88.76M1741.20 132.06L1726.20 140.72M1741.20 132.06L1756.20 140.72M1741.20 149.38L1741.20 184.03M1741.20 149.38L1756.20 140.72M1741.20 184.03L1726.20 192.69M1741.20 184.03L1756.20 192.69M1756.20 -32.48L1756.20 2.16M1756.20 -32.48L1771.20 -41.14M1756.20 2.16L1741.20 10.82M1756.20 2.16L1771.20 10.82M1756.20 19.48L1756.20 54.12M1756.20 19.48L1771.20 10.82M1756.20 54.12L1741.20 62.78M1756.20 54.12L1771.20 62.78M1756.20 71.44L1756.20 106.08M1756.20 71.44L1771.20 62.78M1756.20 106.08L1741.20 114.74M1756.20 106.08L1771.20 114.74M1756.20 123.40L1756.20 158.04M1756.20 123.40L1771.20 114.74M1756.20 158.04L1741.20 166.70M1756.20 158.04L1771.20 166.70M1771.20 -58.46L1771.20 -23.82M1771.20 -58.46L1786.20 -67.12M1771.20 -23.82L1756.20 -15.16M1771.20 -23.82L1786.20 -15.16M1771.20 -6.50L1771.20 28.14M1771.20 -6.50L1786.20 -15.16M1771.20 28.14L1756.20 36.80M1771.20 28.14L1786.20 36.80M1771.20 45.46L1771.20 80.10M1771.20 45.46L1786.20 36.80M1771.20 80.10L1756.20 88.76M1771.20 80.10L1786.20 88.76M1771.20 97.42L1771.20 132.06M1771.20 97.42L1786.20 88.76M1771.20 132.06L1756.20 140.72M1771.20 132.06L1786.20 140.72M1771.20 149.38L1771.20 184.03M1771.20 149.38L1786.20 140.72M1771.20 184.03L1756.20 192.69M1771.20 184.03L1786.20 192.69M1786.20 -32.48L1786.20 2.16M1786.20 -32.48L1801.20 -41.14M1786.20 2.16L1771.20 10.82M1786.20 2.16L1801.20 10.82M1786.20 19.48L1786.20 54.12M1786.20 19.48L1801.20 10.82M1786.20 54.12L1771.20 62.78M1786.20 54.12L1801.20 62.78M1786.20 71.44L1786.20 106.08M1786.20 71.44L1801.20 62.78M1786.20 106.08L1771.20 114.74M1786.20 106.08L1801.20 114.74M1786.20 123.40L1786.20 158.04M1786.20 123.40L1801.20 114.74M1786.20 158.04L1771.20 166.70M1786.20 158.04L1801.20 166.70M1801.20 -58.46L1801.20 -23.82M1801.20 -58.46L1816.20 -67.12M1801.20 -23.82L1786.20 -15.16M1801.20 -23.82L1816.20 -15.16M1801.20 -6.50L1801.20 28.14M1801.20 -6.50L1816.20 -15.16M1801.20 28.14L1786.20 36.80M1801.20 28.14L1816.20 36.80M1801.20 45.46L1801.20 80.10M1801.20 45.46L1816.20 36.80M1801.20 80.10L1786.20 88.76M1801.20 80.10L1816.20 88.76M1801.20 97.42L1801.20 132.06M1801.20 97.42L1816.20 88.76M1801.20 132.06L1786.20 140.72M1801.20 132.06L1816.20 140.72M1801.20 149.38L1801.20 184.03M1801.20 149.38L1816.20 140.72M1801.20 184.03L1786.20 192.69M1801.20 184.03L1816.20 192.69M1816.20 -32.48L1816.20 2.16M1816.20 -32.48L1831.20 -41.14M1816.20 2.16L1801.20 10.82M1816.20 2.16L1831.20 10.82M1816.20 19.48L1816.20 54.12M1816.20 19.48L1831.20 10.82M1816.20 54.12L1801.20 62.78M1816.20 54.12L1831.20 62.78M1816.20 71.44L1816.20 106.08M1816.20 71.44L1831.20 62.78M1816.20 106.08L1801.20 114.74M1816.20 106.08L1831.20 114.74M1816.20 123.40L1816.20 158.04M1816.20 123.40L1831.20 114.74M1816.20 158.04L1801.20 166.70M1816.20 158.04L1831.20 166.70M1831.20 -58.46L1831.20 -23.82M1831.20 -58.46L1846.20 -67.12M1831.20 -23.82L1816.20 -15.16M1831.20 -23.82L1846.20 -15.16M1831.20 -6.50L1831.20 28.14M1831.20 -6.50L1846.20 -15.16M1831.20 28.14L1816.20 36.80M1831.20 28.14L1846.20 36.80M1831.20 45.46L1831.20 80.10M1831.20 45.46L1846.20 36.80M1831.20 80.10L1816.20 88.76M1831.20 80.10L1846.20 88.76M1831.20 97.42L1831.20 132.06M1831.20 97.42L1846.20 88.76M1831.20 132.06L1816.20 140.72M1831.20 132.06L1846.20 140.72M1831.20 149.38L1831.20 184.03M1831.20 149.38L1846.20 140.72M1831.20 184.03L1816.20 192.69M1831.20 184.03L1846.20 192.69M1846.20 -32.48L1846.20 2.16M1846.20 -32.48L1861.20 -41.14M1846.20 2.16L1831.20 10.82M1846.20 2.16L1861.20 10.82M1846.20 19.48L1846.20 54.12M1846.20 19.48L1861.20 10.82M1846.20 54.12L1831.20 62.78M1846.20 54.12L1861.20 62.78M1846.20 71.44L1846.20 106.08M1846.20 71.44L1861.20 62.78M1846.20 106.08L1831.20 114.74M1846.20 106.08L1861.20 114.74M1846.20 123.40L1846.20 158.04M1846.20 123.40L1861.20 114.74M1846.20 158.04L1831.20 166.70M1846.20 158.04L1861.20 166.70M1861.20 -58.46L1861.20 -23.82M1861.20 -58.46L1876.20 -67.12M1861.20 -23.82L1846.20 -15.16M1861.20 -23.82L1876.20 -15.16M1861.20 -6.50L1861.20 28.14M1861.20 -6.50L1876.20 -15.16M1861.20 28.14L1846.20 36.80M1861.20 28.14L1876.20 36.80M1861.20 45.46L1861.20 80.10M1861.20 45.46L1876.20 36.80M1861.20 80.10L1846.20 88.76M1861.20 80.10L1876.20 88.76M1861.20 97.42L1861.20 132.06M1861.20 97.42L1876.20 88.76M1861.20 132.06L1846.20 140.72M1861.20 132.06L1876.20 140.72M1861.20 149.38L1861.20 184.03M1861.20 149.38L1876.20 140.72M1861.20 184.03L1846.20 192.69M1861.20 184.03L1876.20 192.69M1876.20 -32.48L1876.20 2.16M1876.20 -32.48L1891.20 -41.14M1876.20 2.16L1861.20 10.82M1876.20 2.16L1891.20 10.82M1876.20 19.48L1876.20 54.12M1876.20 19.48L1891.20 10.82M1876.20 54.12L1861.20 62.78M1876.20 54.12L1891.20 62.78M1876.20 71.44L1876.20 106.08M1876.20 71.44L1891.20 62.78M1876.20 106.08L1861.20 114.74M1876.20 106.08L1891.20 114.74M1876.20 123.40L1876.20 158.04M1876.20 123.40L1891.20 114.74M1876.20 158.04L1861.20 166.70M1876.20 158.04L1891.20 166.70M1891.20 -58.46L1891.20 -23.82M1891.20 -58.46L1906.20 -67.12M1891.20 -23.82L1876.20 -15.16M1891.20 -23.82L1906.20 -15.16M1891.20 -6.50L1891.20 28.14M1891.20 -6.50L1906.20 -15.16M1891.20 28.14L1876.20 36.80M1891.20 28.14L1906.20 36.80M1891.20 45.46L1891.20 80.10M1891.20 45.46L1906.20 36.80M1891.20 80.10L1876.20 88.76M1891.20 80.10L1906.20 88.76M1891.20 97.42L1891.20 132.06M1891.20 97.42L1906.20 88.76M1891.20 132.06L1876.20 140.72M1891.20 132.06L1906.20 140.72M1891.20 149.38L1891.20 184.03M1891.20 149.38L1906.20 140.72M1891.20 184.03L1876.20 192.69M1891.20 184.03L1906.20 192.69M1906.20 -32.48L1906.20 2.16M1906.20 -32.48L1921.20 -41.14M1906.20 2.16L1891.20 10.82M1906.20 2.16L1921.20 10.82M1906.20 19.48L1906.20 54.12M1906.20 19.48L1921.20 10.82M1906.20 54.12L1891.20 62.78M1906.20 54.12L1921.20 62.78M1906.20 71.44L1906.20 106.08M1906.20 71.44L1921.20 62.78M1906.20 106.08L1891.20 114.74M1906.20 106.08L1921.20 114.74M1906.20 123.40L1906.20 158.04M1906.20 123.40L1921.20 114.74M1906.20 158.04L1891.20 166.70M1906.20 158.04L1921.20 166.70M1921.20 -58.46L1921.20 -23.82M1921.20 -58.46L1936.20 -67.12M1921.20 -23.82L1906.20 -15.16M1921.20 -23.82L1936.20 -15.16M1921.20 -6.50L1921.20 28.14M1921.20 -6.50L1936.20 -15.16M1921.20 28.14L1906.20 36.80M1921.20 28.14L1936.20 36.80M1921.20 45.46L1921.20 80.10M1921.20 45.46L1936.20 36.80M1921.20 80.10L1906.20 88.76M1921.20 80.10L1936.20 88.76M1921.20 97.42L1921.20 132.06M1921.20 97.42L1936.20 88.76M1921.20 132.06L1906.20 140.72M1921.20 132.06L1936.20 140.72M1921.20 149.38L1921.20 184.03M1921.20 149.38L1936.20 140.72M1921.20 184.03L1906.20 192.69M1921.20 184.03L1936.20 192.69M1936.20 -32.48L1936.20 2.16M1936.20 -32.48L1951.20 -41.14M1936.20 2.16L1921.20 10.82M1936.20 2.16L1951.20 10.82M1936.20 19.48L1936.20 54.12M1936.20 19.48L1951.20 10.82M1936.20 54.12L1921.20 62.78M1936.20 54.12L1951.20 62.78M1936.20 71.44L1936.20 106.08M1936.20 71.44L1951.20 62.78M1936.20 106.08L1921.20 114.74M1936.20 106.08L1951.20 114.74M1936.20 123.40L1936.20 158.04M1936.20 123.40L1951.20 114.74M1936.20 158.04L1921.20 166.70M1936.20 158.04L1951.20 166.70M1951.20 -58.46L1951.20 -23.82M1951.20 -58.46L1966.20 -67.12M1951.20 -23.82L1936.20 -15.16M1951.20 -23.82L1966.20 -15.16M1951.20 -6.50L1951.20 28.14M1951.20 -6.50L1966.20 -15.16M1951.20 28.14L1936.20 36.80M1951.20 28.14L1966.20 36.80M1951.20 45.46L1951.20 80.10M1951.20 45.46L1966.20 36.80M1951.20 80.10L1936.20 88.76M1951.20 80.10L1966.20 88.76M1951.20 97.42L1951.20 132.06M1951.20 97.42L1966.20 88.76M1951.20 132.06L1936.20 140.72M1951.20 132.06L1966.20 140.72M1951.20 149.38L1951.20 184.03M1951.20 149.38L1966.20 140.72M1951.20 184.03L1936.20 192.69M1951.20 184.03L1966.20 192.69M1966.20 -32.48L1966.20 2.16M1966.20 -32.48L1981.20 -41.14M1966.20 2.16L1951.20 10.82M1966.20 2.16L1981.20 10.82M1966.20 19.48L1966.20 54.12M1966.20 19.48L1981.20 10.82M1966.20 54.12L1951.20 62.78M1966.20 54.12L1981.20 62.78M1966.20 71.44L1966.20 106.08M1966.20 71.44L1981.20 62.78M1966.20 106.08L1951.20 114.74M1966.20 106.08L1981.20 114.74M1966.20 123.40L1966.20 158.04M1966.20 123.40L1981.20 114.74M1966.20 158.04L1951.20 166.70M1966.20 158.04L1981.20 166.70M1981.20 -58.46L1981.20 -23.82M1981.20 -58.46L1996.20 -67.12M1981.20 -23.82L1966.20 -15.16M1981.20 -23.82L1996.20 -15.16M1981.20 -6.50L1981.20 28.14M1981.20 -6.50L1996.20 -15.16M1981.20 28.14L1966.20 36.80M1981.20 28.14L1996.20 36.80M1981.20 45.46L1981.20 80.10M1981.20 45.46L1996.20 36.80M1981.20 80.10L1966.20 88.76M1981.20 80.10L1996.20 88.76M1981.20 97.42L1981.20 132.06M1981.20 97.42L1996.20 88.76M1981.20 132.06L1966.20 140.72M1981.20 132.06L1996.20 140.72M1981.20 149.38L1981.20 184.03M1981.20 149.38L1996.20 140.72M1981.20 184.03L1966.20 192.69M1981.20 184.03L1996.20 192.69M1996.20 -32.48L1996.20 2.16M1996.20 -32.48L2011.20 -41.14M1996.20 2.16L1981.20 10.82M1996.20 2.16L2011.20 10.82M1996.20 19.48L1996.20 54.12M1996.20 19.48L2011.20 10.82M1996.20 54.12L1981.20 62.78M1996.20 54.12L2011.20 62.78M1996.20 71.44L1996.20 106.08M1996.20 71.44L2011.20 62.78M1996.20 106.08L1981.20 114.74M1996.20 106.08L2011.20 114.74M1996.20 123.40L1996.20 158.04M1996.20 123.40L2011.20 114.74M1996.20 158.04L1981.20 166.70M1996.20 158.04L2011.20 166.70M2011.20 -58.46L2011.20 -23.82M2011.20 -58.46L2026.20 -67.12M2011.20 -23.82L1996.20 -15.16M2011.20 -23.82L2026.20 -15.16M2011.20 -6.50L2011.20 28.14M2011.20 -6.50L2026.20 -15.16M2011.20 28.14L1996.20 36.80M2011.20 28.14L2026.20 36.80M2011.20 45.46L2011.20 80.10M2011.20 45.46L2026.20 36.80M2011.20 80.10L1996.20 88.76M2011.20 80.10L2026.20 88.76M2011.20 97.42L2011.20 132.06M2011.20 97.42L2026.20 88.76M2011.20 132.06L1996.20 140.72M2011.20 132.06L2026.20 140.72M2011.20 149.38L2011.20 184.03M2011.20 149.38L2026.20 140.72M2011.20 184.03L1996.20 192.69M2011.20 184.03L2026.20 192.69M2026.20 -32.48L2026.20 2.16M2026.20 -32.48L2041.20 -41.14M2026.20 2.16L2011.20 10.82M2026.20 2.16L2041.20 10.82M2026.20 19.48L2026.20 54.12M2026.20 19.48L2041.20 10.82M2026.20 54.12L2011.20 62.78M2026.20 54.12L2041.20 62.78M2026.20 71.44L2026.20 106.08M2026.20 71.44L2041.20 62.78M2026.20 106.08L2011.20 114.74M2026.20 106.08L2041.20 114.74M2026.20 123.40L2026.20 158.04M2026.20 123.40L2041.20 114.74M2026.20 158.04L2011.20 166.70M2026.20 158.04L2041.20 166.70M2041.20 -58.46L2041.20 -23.82M2041.20 -58.46L2056.20 -67.12M2041.20 -23.82L2026.20 -15.16M2041.20 -23.82L2056.20 -15.16M2041.20 -6.50L2041.20 28.14M2041.20 -6.50L2056.20 -15.16M2041.20 28.14L2026.20 36.80M2041.20 28.14L2056.20 36.80M2041.20 45.46L2041.20 80.10M2041.20 45.46L2056.20 36.80M2041.20 80.10L2026.20 88.76M2041.20 80.10L2056.20 88.76M2041.20 97.42L2041.20 132.06M2041.20 97.42L2056.20 88.76M2041.20 132.06L2026.20 140.72M2041.20 132.06L2056.20 140.72M2041.20 149.38L2041.20 184.03M2041.20 149.38L2056.20 140.72M2041.20 184.03L2026.20 192.69M2041.20 184.03L2056.20 192.69M2056.20 -32.48L2056.20 2.16M2056.20 -32.48L2071.20 -41.14M2056.20 2.16L2041.20 10.82M2056.20 2.16L2071.20 10.82M2056.20 19.48L2056.20 54.12M2056.20 19.48L2071.20 10.82M2056.20 54.12L2041.20 62.78M2056.20 54.12L2071.20 62.78M2056.20 71.44L2056.20 106.08M2056.20 71.44L2071.20 62.78M2056.20 106.08L2041.20 114.74M2056.20 106.08L2071.20 114.74M2056.20 123.40L2056.20 158.04M2056.20 123.40L2071.20 114.74M2056.20 158.04L2041.20 166.70M2056.20 158.04L2071.20 166.70M2071.20 -58.46L2071.20 -23.82M2071.20 -58.46L2086.20 -67.12M2071.20 -23.82L2056.20 -15.16M2071.20 -23.82L2086.20 -15.16M2071.20 -6.50L2071.20 28.14M2071.20 -6.50L2086.20 -15.16M2071.20 28.14L2056.20 36.80M2071.20 28.14L2086.20 36.80M2071.20 45.46L2071.20 80.10M2071.20 45.46L2086.20 36.80M2071.20 80.10L2056.20 88.76M2071.20 80.10L2086.20 88.76M2071.20 97.42L2071.20 132.06M2071.20 97.42L2086.20 88.76M2071.20 132.06L2056.20 140.72M2071.20 132.06L2086.20 140.72M2071.20 149.38L2071.20 184.03M2071.20 149.38L2086.20 140.72M2071.20 184.03L2056.20 192.69M2071.20 184.03L2086.20 192.69M2086.20 -32.48L2086.20 2.16M2086.20 -32.48L2101.20 -41.14M2086.20 2.16L2071.20 10.82M2086.20 2.16L2101.20 10.82M2086.20 19.48L2086.20 54.12M2086.20 19.48L2101.20 10.82M2086.20 54.12L2071.20 62.78M2086.20 54.12L2101.20 62.78M2086.20 71.44L2086.20 106.08M2086.20 71.44L2101.20 62.78M2086.20 106.08L2071.20 114.74M2086.20 106.08L2101.20 114.74M2086.20 123.40L2086.20 158.04M2086.20 123.40L2101.20 114.74M2086.20 158.04L2071.20 166.70M2086.20 158.04L2101.20 166.70M2101.20 -58.46L2101.20 -23.82M2101.20 -58.46L2116.20 -67.12M2101.20 -23.82L2086.20 -15.16M2101.20 -23.82L2116.20 -15.16M2101.20 -6.50L2101.20 28.14M2101.20 -6.50L2116.20 -15.16M2101.20 28.14L2086.20 36.80M2101.20 28.14L2116.20 36.80M2101.20 45.46L2101.20 80.10M2101.20 45.46L2116.20 36.80M2101.20 80.10L2086.20 88.76M2101.20 80.10L2116.20 88.76M2101.20 97.42L2101.20 132.06M2101.20 97.42L2116.20 88.76M2101.20 132.06L2086.20 140.72M2101.20 132.06L2116.20 140.72M2101.20 149.38L2101.20 184.03M2101.20 149.38L2116.20 140.72M2101.20 184.03L2086.20 192.69M2101.20 184.03L2116.20 192.69M2116.20 -32.48L2116.20 2.16M2116.20 -32.48L2131.20 -41.14M2116.20 2.16L2101.20 10.82M2116.20 2.16L2131.20 10.82M2116.20 19.48L2116.20 54.12M2116.20 19.48L2131.20 10.82M2116.20 54.12L2101.20 62.78M2116.20 54.12L2131.20 62.78M2116.20 71.44L2116.20 106.08M2116.20 71.44L2131.20 62.78M2116.20 106.08L2101.20 114.74M2116.20 106.08L2131.20 114.74M2116.20 123.40L2116.20 158.04M2116.20 123.40L2131.20 114.74M2116.20 158.04L2101.20 166.70M2116.20 158.04L2131.20 166.70M2131.20 -58.46L2131.20 -23.82M2131.20 -58.46L2146.20 -67.12M2131.20 -23.82L2116.20 -15.16M2131.20 -23.82L2146.20 -15.16M2131.20 -6.50L2131.20 28.14M2131.20 -6.50L2146.20 -15.16M2131.20 28.14L2116.20 36.80M2131.20 28.14L2146.20 36.80M2131.20 45.46L2131.20 80.10M2131.20 45.46L2146.20 36.80M2131.20 80.10L2116.20 88.76M2131.20 80.10L2146.20 88.76M2131.20 97.42L2131.20 132.06M2131.20 97.42L2146.20 88.76M2131.20 132.06L2116.20 140.72M2131.20 132.06L2146.20 140.72M2131.20 149.38L2131.20 184.03M2131.20 149.38L2146.20 140.72M2131.20 184.03L2116.20 192.69M2131.20 184.03L2146.20 192.69M2146.20 -32.48L2146.20 2.16M2146.20 -32.48L2161.20 -41.14M2146.20 2.16L2131.20 10.82M2146.20 2.16L2161.20 10.82M2146.20 19.48L2146.20 54.12M2146.20 19.48L2161.20 10.82M2146.20 54.12L2131.20 62.78M2146.20 54.12L2161.20 62.78M2146.20 71.44L2146.20 106.08M2146.20 71.44L2161.20 62.78M2146.20 106.08L2131.20 114.74M2146.20 106.08L2161.20 114.74M2146.20 123.40L2146.20 158.04M2146.20 123.40L2161.20 114.74M2146.20 158.04L2131.20 166.70M2146.20 158.04L2161.20 166.70M2161.20 -58.46L2161.20 -23.82M2161.20 -58.46L2176.20 -67.12M2161.20 -23.82L2146.20 -15.16M2161.20 -23.82L2176.20 -15.16M2161.20 -6.50L2161.20 28.14M2161.20 -6.50L2176.20 -15.16M2161.20 28.14L2146.20 36.80M2161.20 28.14L2176.20 36.80M2161.20 45.46L2161.20 80.10M2161.20 45.46L2176.20 36.80M2161.20 80.10L2146.20 88.76M2161.20 80.10L2176.20 88.76M2161.20 97.42L2161.20 132.06M2161.20 97.42L2176.20 88.76M2161.20 132.06L2146.20 140.72M2161.20 132.06L2176.20 140.72M2161.20 149.38L2161.20 184.03M2161.20 149.38L2176.20 140.72M2161.20 184.03L2146.20 192.69M2161.20 184.03L2176.20 192.69M2176.20 -32.48L2176.20 2.16M2176.20 -32.48L2191.20 -41.14M2176.20 2.16L2161.20 10.82M2176.20 2.16L2191.20 10.82M2176.20 19.48L2176.20 54.12M2176.20 19.48L2191.20 10.82M2176.20 54.12L2161.20 62.78M2176.20 54.12L2191.20 62.78M2176.20 71.44L2176.20 106.08M2176.20 71.44L2191.20 62.78M2176.20 106.08L2161.20 114.74M2176.20 106.08L2191.20 114.74M2176.20 123.40L2176.20 158.04M2176.20 123.40L2191.20 114.74M2176.20 158.04L2161.20 166.70M2176.20 158.04L2191.20 166.70M2191.20 -58.46L2191.20 -23.82M2191.20 -58.46L2206.20 -67.12M2191.20 -23.82L2176.20 -15.16M2191.20 -23.82L2206.20 -15.16M2191.20 -6.50L2191.20 28.14M2191.20 -6.50L2206.20 -15.16M2191.20 28.14L2176.20 36.80M2191.20 28.14L2206.20 36.80M2191.20 45.46L2191.20 80.10M2191.20 45.46L2206.20 36.80M2191.20 80.10L2176.20 88.76M2191.20 80.10L2206.20 88.76M2191.20 97.42L2191.20 132.06M2191.20 97.42L2206.20 88.76M2191.20 132.06L2176.20 140.72M2191.20 132.06L2206.20 140.72M2191.20 149.38L2191.20 184.03M2191.20 149.38L2206.20 140.72M2191.20 184.03L2176.20 192.69M2191.20 184.03L2206.20 192.69M2206.20 -32.48L2206.20 2.16M2206.20 -32.48L2221.20 -41.14M2206.20 2.16L2191.20 10.82M2206.20 2.16L2221.20 10.82M2206.20 19.48L2206.20 54.12M2206.20 19.48L2221.20 10.82M2206.20 54.12L2191.20 62.78M2206.20 54.12L2221.20 62.78M2206.20 71.44L2206.20 106.08M2206.20 71.44L2221.20 62.78M2206.20 106.08L2191.20 114.74M2206.20 106.08L2221.20 114.74M2206.20 123.40L2206.20 158.04M2206.20 123.40L2221.20 114.74M2206.20 158.04L2191.20 166.70M2206.20 158.04L2221.20 166.70M2221.20 -58.46L2221.20 -23.82M2221.20 -58.46L2236.20 -67.12M2221.20 -23.82L2206.20 -15.16M2221.20 -23.82L2236.20 -15.16M2221.20 -6.50L2221.20 28.14M2221.20 -6.50L2236.20 -15.16M2221.20 28.14L2206.20 36.80M2221.20 28.14L2236.20 36.80M2221.20 45.46L2221.20 80.10M2221.20 45.46L2236.20 36.80M2221.20 80.10L2206.20 88.76M2221.20 80.10L2236.20 88.76M2221.20 97.42L2221.20 132.06M2221.20 97.42L2236.20 88.76M2221.20 132.06L2206.20 140.72M2221.20 132.06L2236.20 140.72M2221.20 149.38L2221.20 184.03M2221.20 149.38L2236.20 140.72M2221.20 184.03L2206.20 192.69M2221.20 184.03L2236.20 192.69M2236.20 -32.48L2236.20 2.16M2236.20 -32.48L2251.20 -41.14M2236.20 2.16L2221.20 10.82M2236.20 2.16L2251.20 10.82M2236.20 19.48L2236.20 54.12M2236.20 19.48L2251.20 10.82M2236.20 54.12L2221.20 62.78M2236.20 54.12L2251.20 62.78M2236.20 71.44L2236.20 106.08M2236.20 71.44L2251.20 62.78M2236.20 106.08L2221.20 114.74M2236.20 106.08L2251.20 114.74M2236.20 123.40L2236.20 158.04M2236.20 123.40L2251.20 114.74M2236.20 158.04L2221.20 166.70M2236.20 158.04L2251.20 166.70M2251.20 -58.46L2251.20 -23.82M2251.20 -58.46L2266.20 -67.12M2251.20 -23.82L2236.20 -15.16M2251.20 -23.82L2266.20 -15.16M2251.20 -6.50L2251.20 28.14M2251.20 -6.50L2266.20 -15.16M2251.20 28.14L2236.20 36.80M2251.20 28.14L2266.20 36.80M2251.20 45.46L2251.20 80.10M2251.20 45.46L2266.20 36.80M2251.20 80.10L2236.20 88.76M2251.20 80.10L2266.20 88.76M2251.20 97.42L2251.20 132.06M2251.20 97.42L2266.20 88.76M2251.20 132.06L2236.20 140.72M2251.20 132.06L2266.20 140.72M2251.20 149.38L2251.20 184.03M2251.20 149.38L2266.20 140.72M2251.20 184.03L2236.20 192.69M2251.20 184.03L2266.20 192.69M2266.20 -32.48L2266.20 2.16M2266.20 -32.48L2281.20 -41.14M2266.20 2.16L2251.20 10.82M2266.20 2.16L2281.20 10.82M2266.20 19.48L2266.20 54.12M2266.20 19.48L2281.20 10.82M2266.20 54.12L2251.20 62.78M2266.20 54.12L2281.20 62.78M2266.20 71.44L2266.20 106.08M2266.20 71.44L2281.20 62.78M2266.20 106.08L2251.20 114.74M2266.20 106.08L2281.20 114.74M2266.20 123.40L2266.20 158.04M2266.20 123.40L2281.20 114.74M2266.20 158.04L2251.20 166.70M2266.20 158.04L2281.20 166.70M2281.20 -58.46L2281.20 -23.82M2281.20 -58.46L2296.20 -67.12M2281.20 -23.82L2266.20 -15.16M2281.20 -23.82L2296.20 -15.16M2281.20 -6.50L2281.20 28.14M2281.20 -6.50L2296.20 -15.16M2281.20 28.14L2266.20 36.80M2281.20 28.14L2296.20 36.80M2281.20 45.46L2281.20 80.10M2281.20 45.46L2296.20 36.80M2281.20 80.10L2266.20 88.76M2281.20 80.10L2296.20 88.76M2281.20 97.42L2281.20 132.06M2281.20 97.42L2296.20 88.76M2281.20 132.06L2266.20 140.72M2281.20 132.06L2296.20 140.72M2281.20 149.38L2281.20 184.03M2281.20 149.38L2296.20 140.72M2281.20 184.03L2266.20 192.69M2281.20 184.03L2296.20 192.69M2296.20 -32.48L2296.20 2.16M2296.20 -32.48L2311.20 -41.14M2296.20 2.16L2281.20 10.82M2296.20 2.16L2311.20 10.82M2296.20 19.48L2296.20 54.12M2296.20 19.48L2311.20 10.82M2296.20 54.12L2281.20 62.78M2296.20 54.12L2311.20 62.78M2296.20 71.44L2296.20 106.08M2296.20 71.44L2311.20 62.78M2296.20 106.08L2281.20 114.74M2296.20 106.08L2311.20 114.74M2296.20 123.40L2296.20 158.04M2296.20 123.40L2311.20 114.74M2296.20 158.04L2281.20 166.70M2296.20 158.04L2311.20 166.70M2311.20 -58.46L2311.20 -23.82M2311.20 -58.46L2326.20 -67.12M2311.20 -23.82L2296.20 -15.16M2311.20 -23.82L2326.20 -15.16M2311.20 -6.50L2311.20 28.14M2311.20 -6.50L2326.20 -15.16M2311.20 28.14L2296.20 36.80M2311.20 28.14L2326.20 36.80M2311.20 45.46L2311.20 80.10M2311.20 45.46L2326.20 36.80M2311.20 80.10L2296.20 88.76M2311.20 80.10L2326.20 88.76M2311.20 97.42L2311.20 132.06M2311.20 97.42L2326.20 88.76M2311.20 132.06L2296.20 140.72M2311.20 132.06L2326.20 140.72M2311.20 149.38L2311.20 184.03M2311.20 149.38L2326.20 140.72M2311.20 184.03L2296.20 192.69M2311.20 184.03L2326.20 192.69M2326.20 -32.48L2326.20 2.16M2326.20 -32.48L2341.20 -41.14M2326.20 2.16L2311.20 10.82M2326.20 2.16L2341.20 10.82M2326.20 19.48L2326.20 54.12M2326.20 19.48L2341.20 10.82M2326.20 54.12L2311.20 62.78M2326.20 54.12L2341.20 62.78M2326.20 71.44L2326.20 106.08M2326.20 71.44L2341.20 62.78M2326.20 106.08L2311.20 114.74M2326.20 106.08L2341.20 114.74M2326.20 123.40L2326.20 158.04M2326.20 123.40L2341.20 114.74M2326.20 158.04L2311.20 166.70M2326.20 158.04L2341.20 166.70M2341.20 -58.46L2341.20 -23.82M2341.20 -58.46L2356.20 -67.12M2341.20 -23.82L2326.20 -15.16M2341.20 -23.82L2356.20 -15.16M2341.20 -6.50L2341.20 28.14M2341.20 -6.50L2356.20 -15.16M2341.20 28.14L2326.20 36.80M2341.20 28.14L2356.20 36.80M2341.20 45.46L2341.20 80.10M2341.20 45.46L2356.20 36.80M2341.20 80.10L2326.20 88.76M2341.20 80.10L2356.20 88.76M2341.20 97.42L2341.20 132.06M2341.20 97.42L2356.20 88.76M2341.20 132.06L2326.20 140.72M2341.20 132.06L2356.20 140.72M2341.20 149.38L2341.20 184.03M2341.20 149.38L2356.20 140.72M2341.20 184.03L2326.20 192.69M2341.20 184.03L2356.20 192.69" stroke="#e3e4e8" stroke-width="1.05" fill="none"/></svg></div>
<div class="t" id="t11" style="left:1082.57px;top:181.25px;font-size:50.5px;font-weight:400;color:#1d4d5c;letter-spacing:-0.057px;"><span style="color:#1d4d5c">Forum</span><span style="color:#5171bf;font-weight:700">OSM</span></div>
<div class="t" id="t12" style="left:1354.00px;top:188.88px;font-size:15.5px;font-weight:400;color:#2e5e6c;letter-spacing:-0.180px;">Outsourcing</div>
<div class="t" id="t13" style="left:1353.00px;top:208.88px;font-size:15.5px;font-weight:400;color:#2e5e6c;letter-spacing:-0.333px;">Management</div>
<div class="t" id="t14" style="left:1091.38px;top:249.35px;font-size:20.5px;font-weight:400;color:#222;letter-spacing:0.448px;">ForumSuite NightlyBuild ForumSuite</div>
<div class="a" style="left:102px;top:315px;width:2325px;height:90px;border:1px solid #9acfea;background:linear-gradient(#d9edf7,#b9def0);box-shadow:0 1px 2px rgba(0,0,0,.05)"></div>
<div class="t" id="t15" style="left:122.00px;top:339.19px;font-size:17.5px;font-weight:400;color:#31708f;letter-spacing:-0.389px;">Aktuelle Inhalte für</div>
<div class="t" id="t16" style="left:264.76px;top:338.61px;font-size:17px;font-weight:700;color:#2a6889;letter-spacing:-0.317px;">osm.system.dao.readonly.vorschlaege-banken</div>
<div class="t" id="t17" style="left:122.00px;top:364.49px;font-size:17.5px;font-weight:400;color:#333;letter-spacing:-0.639px;"><b>21</b> geändert, davon <b>21</b> verwendet. | <b>Meine geänderten Vorschläge</b></div>
<svg class="a" style="left:2394px;top:339px;" width="13" height="12" viewBox="0 0 13 12"><path d="M1.8 1.8 L11.2 10.2 M11.2 1.8 L1.8 10.2" stroke="#a3b2ba" stroke-width="3.2" stroke-linecap="round"/></svg>
<div class="a" style="left:102px;top:442px;width:2325px;height:39px;border:1px solid #dedede;border-bottom:2px solid #d7d7d7;background:#f4f4f4"></div>
<div class="a" style="left:131px;top:455px;width:0;height:0;border-top:6px solid transparent;border-bottom:6px solid transparent;border-left:7px solid #2a2a2a"></div>
<div class="t" id="t18" style="left:146.18px;top:451.92px;font-size:19px;font-weight:400;color:#333;letter-spacing:0.125px;">Übersicht</div>
<div class="a" style="left:102px;top:506px;width:758px;height:460px;border:1px solid #dddddd;background:#fff"></div>
<div class="a" style="left:102px;top:506px;width:758px;height:35px;border:1px solid #dddddd;background:#f5f5f5"></div>
<div class="t" id="t19" style="left:115.78px;top:515.19px;font-size:17.5px;font-weight:700;color:#333;letter-spacing:-0.693px;">Dienstleistungen</div>
<svg class="a" style="left:828.5px;top:515px;" width="20" height="17" viewBox="0 0 20 17"><path d="M1 8 C4.5 1.3, 14.5 1.3, 18.3 8 C14.5 14.7, 4.5 14.7, 1 8 Z" fill="none" stroke="#555" stroke-width="1.5"/><path d="M13.6 1.2 L6.6 15" stroke="#f5f5f5" stroke-width="3.6"/><path d="M11 4.8 Q6.6 5.6 6.6 8.8 Q6.8 10.8 8 11.8" fill="none" stroke="#555" stroke-width="1.5"/><path d="M9.6 5 L12.2 4.6 L9.6 9.8 Z" fill="#555"/><path d="M13.4 1.6 L6.8 14.6" stroke="#555" stroke-width="1.8" stroke-linecap="round"/></svg>
<div class="a" style="left:885px;top:506px;width:759px;height:460px;border:1px solid #dddddd;background:#fff"></div>
<div class="a" style="left:885px;top:506px;width:759px;height:35px;border:1px solid #dddddd;background:#f5f5f5"></div>
<div class="t" id="t20" style="left:898.78px;top:515.19px;font-size:17.5px;font-weight:700;color:#333;letter-spacing:-0.831px;">Risiko-Cockpit</div>
<svg class="a" style="left:1612.5px;top:515px;" width="20" height="17" viewBox="0 0 20 17"><path d="M1 8 C4.5 1.3, 14.5 1.3, 18.3 8 C14.5 14.7, 4.5 14.7, 1 8 Z" fill="none" stroke="#555" stroke-width="1.5"/><path d="M13.6 1.2 L6.6 15" stroke="#f5f5f5" stroke-width="3.6"/><path d="M11 4.8 Q6.6 5.6 6.6 8.8 Q6.8 10.8 8 11.8" fill="none" stroke="#555" stroke-width="1.5"/><path d="M9.6 5 L12.2 4.6 L9.6 9.8 Z" fill="#555"/><path d="M13.4 1.6 L6.8 14.6" stroke="#555" stroke-width="1.8" stroke-linecap="round"/></svg>
<div class="a" style="left:1669px;top:506px;width:758px;height:165px;border:1px solid #dddddd;background:#fff"></div>
<div class="a" style="left:1669px;top:506px;width:758px;height:35px;border:1px solid #dddddd;background:#f5f5f5"></div>
<div class="t" id="t21" style="left:1683.78px;top:515.19px;font-size:17.5px;font-weight:700;color:#333;letter-spacing:-0.700px;">Workflows</div>
<svg class="a" style="left:2395.5px;top:515px;" width="20" height="17" viewBox="0 0 20 17"><path d="M1 8 C4.5 1.3, 14.5 1.3, 18.3 8 C14.5 14.7, 4.5 14.7, 1 8 Z" fill="none" stroke="#555" stroke-width="1.5"/><path d="M13.6 1.2 L6.6 15" stroke="#f5f5f5" stroke-width="3.6"/><path d="M11 4.8 Q6.6 5.6 6.6 8.8 Q6.8 10.8 8 11.8" fill="none" stroke="#555" stroke-width="1.5"/><path d="M9.6 5 L12.2 4.6 L9.6 9.8 Z" fill="#555"/><path d="M13.4 1.6 L6.8 14.6" stroke="#555" stroke-width="1.8" stroke-linecap="round"/></svg>
<div class="a" style="left:1669px;top:696px;width:758px;height:270px;border:1px solid #dddddd;background:#fff"></div>
<div class="a" style="left:1669px;top:696px;width:758px;height:35px;border:1px solid #dddddd;background:#f5f5f5"></div>
<div class="t" id="t22" style="left:1682.78px;top:705.19px;font-size:17.5px;font-weight:700;color:#333;letter-spacing:-0.771px;">Meine offenen Aufgaben</div>
<svg class="a" style="left:2395.5px;top:705px;" width="20" height="17" viewBox="0 0 20 17"><path d="M1 8 C4.5 1.3, 14.5 1.3, 18.3 8 C14.5 14.7, 4.5 14.7, 1 8 Z" fill="none" stroke="#555" stroke-width="1.5"/><path d="M13.6 1.2 L6.6 15" stroke="#f5f5f5" stroke-width="3.6"/><path d="M11 4.8 Q6.6 5.6 6.6 8.8 Q6.8 10.8 8 11.8" fill="none" stroke="#555" stroke-width="1.5"/><path d="M9.6 5 L12.2 4.6 L9.6 9.8 Z" fill="#555"/><path d="M13.4 1.6 L6.8 14.6" stroke="#555" stroke-width="1.8" stroke-linecap="round"/></svg>
<div class="a" style="left:102px;top:991px;width:758px;height:309px;border:1px solid #dddddd;background:#fff"></div>
<div class="a" style="left:102px;top:991px;width:758px;height:35px;border:1px solid #dddddd;background:#f5f5f5"></div>
<div class="t" id="t23" style="left:116.78px;top:1000.19px;font-size:17.5px;font-weight:700;color:#333;letter-spacing:-0.843px;">Verträge und Leistungsscheine</div>
<svg class="a" style="left:828.5px;top:1000px;" width="20" height="17" viewBox="0 0 20 17"><path d="M1 8 C4.5 1.3, 14.5 1.3, 18.3 8 C14.5 14.7, 4.5 14.7, 1 8 Z" fill="none" stroke="#555" stroke-width="1.5"/><path d="M13.6 1.2 L6.6 15" stroke="#f5f5f5" stroke-width="3.6"/><path d="M11 4.8 Q6.6 5.6 6.6 8.8 Q6.8 10.8 8 11.8" fill="none" stroke="#555" stroke-width="1.5"/><path d="M9.6 5 L12.2 4.6 L9.6 9.8 Z" fill="#555"/><path d="M13.4 1.6 L6.8 14.6" stroke="#555" stroke-width="1.8" stroke-linecap="round"/></svg>
<div class="a" style="left:885px;top:991px;width:759px;height:152px;border:1px solid #dddddd;background:#fff"></div>
<div class="a" style="left:885px;top:991px;width:759px;height:35px;border:1px solid #dddddd;background:#f5f5f5"></div>
<div class="t" id="t24" style="left:899.78px;top:1000.19px;font-size:17.5px;font-weight:700;color:#333;letter-spacing:-0.400px;">Vorfälle</div>
<svg class="a" style="left:1612.5px;top:1000px;" width="20" height="17" viewBox="0 0 20 17"><path d="M1 8 C4.5 1.3, 14.5 1.3, 18.3 8 C14.5 14.7, 4.5 14.7, 1 8 Z" fill="none" stroke="#555" stroke-width="1.5"/><path d="M13.6 1.2 L6.6 15" stroke="#f5f5f5" stroke-width="3.6"/><path d="M11 4.8 Q6.6 5.6 6.6 8.8 Q6.8 10.8 8 11.8" fill="none" stroke="#555" stroke-width="1.5"/><path d="M9.6 5 L12.2 4.6 L9.6 9.8 Z" fill="#555"/><path d="M13.4 1.6 L6.8 14.6" stroke="#555" stroke-width="1.8" stroke-linecap="round"/></svg>
<svg class="a" style="left:125.60000000000002px;top:569.2px;" width="280" height="280" viewBox="0 0 280 280"><path d="M35.74 211.29 A126.3 126.3 0 0 1 139.78 13.70" fill="none" stroke="#a6dcc6" stroke-width="2.6" stroke-dasharray="8 6"/><path d="M64.13 54.11 A114.6 114.6 0 0 1 139.80 25.40" fill="none" stroke="#c4cdea" stroke-width="2.6" stroke-dasharray="8 6"/><path d="M141.10 13.70 A126.3 126.3 0 1 1 35.74 211.29" fill="none" stroke="#0aa86e" stroke-width="7.8" stroke-linecap="round"/><path d="M141.00 25.40 A114.6 114.6 0 1 1 64.13 54.11" fill="none" stroke="#5170bd" stroke-width="7.8" stroke-linecap="round"/></svg>
<div class="t" id="t25" style="left:233.00px;top:648.98px;font-size:37px;font-weight:700;color:#5070bb;letter-spacing:1.600px;">165</div>
<div class="t" id="t26" style="left:199.00px;top:693.30px;font-size:15px;font-weight:700;color:#222;letter-spacing:0.693px;">Dienstleistungen</div>
<div class="t" id="t27" style="left:182.50px;top:735.03px;font-size:16.5px;font-weight:400;color:#3c3c3c;letter-spacing:0.082px;"><b style="color:#5070bb">146</b> mit Klassifizierung</div>
<div class="t" id="t28" style="left:206.88px;top:759.13px;font-size:16.5px;font-weight:400;color:#3c3c3c;letter-spacing:-0.100px;"><b style="color:#0aa86e">108</b> freigegeben</div>
<div class="t" id="t29" style="left:486.00px;top:611.48px;font-size:37px;font-weight:700;color:#5070bb;letter-spacing:1.800px;">39</div>
<div class="t" id="t30" style="left:544.17px;top:624.31px;font-size:17px;font-weight:700;color:#888;letter-spacing:-0.200px;">165</div>
<svg class="a" style="left:532px;top:621.7px;" width="9" height="21" viewBox="0 0 9 21"><path d="M6.6 1.5 L1.8 19" stroke="#888" stroke-width="1.5"/></svg>
<div class="t" id="t31" style="left:488.07px;top:654.20px;font-size:15px;font-weight:700;color:#222;letter-spacing:0.711px;">wesentlich</div>
<div class="t" id="t32" style="left:700.17px;top:611.48px;font-size:37px;font-weight:700;color:#5070bb;">6</div>
<div class="t" id="t33" style="left:735.76px;top:624.31px;font-size:17px;font-weight:700;color:#888;letter-spacing:0.200px;">165</div>
<svg class="a" style="left:723.9px;top:621.7px;" width="9" height="21" viewBox="0 0 9 21"><path d="M6.6 1.5 L1.8 19" stroke="#888" stroke-width="1.5"/></svg>
<div class="t" id="t34" style="left:668.00px;top:654.20px;font-size:15px;font-weight:700;color:#222;letter-spacing:0.800px;">nicht wesentlich</div>
<div class="t" id="t35" style="left:486.00px;top:713.78px;font-size:37px;font-weight:700;color:#5070bb;letter-spacing:2.000px;">27</div>
<div class="t" id="t36" style="left:544.17px;top:728.41px;font-size:17px;font-weight:700;color:#888;letter-spacing:-0.200px;">165</div>
<svg class="a" style="left:532px;top:725.8px;" width="9" height="21" viewBox="0 0 9 21"><path d="M6.6 1.5 L1.8 19" stroke="#888" stroke-width="1.5"/></svg>
<div class="t" id="t37" style="left:442.67px;top:758.30px;font-size:15px;font-weight:700;color:#222;letter-spacing:0.579px;">Sonstiger Fremdbezug</div>
<div class="t" id="t38" style="left:495.67px;top:779.70px;font-size:15px;font-weight:700;color:#222;letter-spacing:0.686px;">(MaRisk)</div>
<div class="t" id="t39" style="left:690.78px;top:713.78px;font-size:37px;font-weight:700;color:#5070bb;letter-spacing:0.200px;">42</div>
<div class="t" id="t40" style="left:746.57px;top:728.41px;font-size:17px;font-weight:700;color:#888;letter-spacing:0.500px;">165</div>
<svg class="a" style="left:734.6px;top:725.8px;" width="9" height="21" viewBox="0 0 9 21"><path d="M6.6 1.5 L1.8 19" stroke="#888" stroke-width="1.5"/></svg>
<div class="t" id="t41" style="left:645.50px;top:758.30px;font-size:15px;font-weight:700;color:#222;letter-spacing:0.621px;">Sonstiger Fremdbezug</div>
<div class="t" id="t42" style="left:708.38px;top:779.70px;font-size:15px;font-weight:700;color:#222;letter-spacing:0.600px;">(BAIT)</div>
<div class="t" id="t43" style="left:987.57px;top:563.58px;font-size:37px;font-weight:700;color:#5070bb;letter-spacing:2.000px;">230</div>
<div class="t" id="t44" style="left:963.38px;top:607.40px;font-size:15px;font-weight:700;color:#222;letter-spacing:0.471px;">Risiken erfasst</div>
<div class="t" id="t45" style="left:1232.17px;top:563.58px;font-size:37px;font-weight:700;color:#dd0000;">2</div>
<div class="t" id="t46" style="left:1268.17px;top:576.81px;font-size:17px;font-weight:700;color:#888;letter-spacing:-0.100px;">230</div>
<svg class="a" style="left:1256px;top:575.2px;" width="9" height="21" viewBox="0 0 9 21"><path d="M6.6 1.5 L1.8 19" stroke="#888" stroke-width="1.5"/></svg>
<div class="t" id="t47" style="left:1200.78px;top:607.40px;font-size:15px;font-weight:700;color:#222;letter-spacing:0.692px;">ohne Bewertung</div>
<div class="t" id="t48" style="left:1475.00px;top:563.58px;font-size:37px;font-weight:700;color:#dd0000;">2</div>
<div class="t" id="t49" style="left:1511.78px;top:576.81px;font-size:17px;font-weight:700;color:#888;letter-spacing:0.400px;">230</div>
<svg class="a" style="left:1499.4px;top:575.2px;" width="9" height="21" viewBox="0 0 9 21"><path d="M6.6 1.5 L1.8 19" stroke="#888" stroke-width="1.5"/></svg>
<div class="t" id="t50" style="left:1448.00px;top:607.40px;font-size:15px;font-weight:700;color:#222;letter-spacing:0.571px;">ohne Restrisiko</div>
<div class="a" style="left:899px;top:645px;width:731px;height:1px;background:#dddddd"></div>
<div class="t" id="t51" style="left:898.00px;top:662.61px;font-size:17px;font-weight:700;color:#333;letter-spacing:-0.400px;">Restrisiken</div>
<div class="t" id="t52" style="left:972.00px;top:727.95px;font-size:14px;font-weight:700;color:#333;letter-spacing:-0.600px;">SP</div>
<div class="t" id="t53" style="left:986.00px;top:763.03px;font-size:14.5px;font-weight:400;color:#333;">4</div>
<div class="a" style="left:1004px;top:753px;width:35px;height:35px;background:#ffff00;border-radius:3px"></div>
<div class="t" id="t54" style="left:1017.50px;top:763.73px;font-size:14.5px;font-weight:700;color:#333;">6</div>
<div class="a" style="left:1044px;top:753px;width:35px;height:35px;background:#fbb829;border-radius:3px"></div>
<div class="t" id="t55" style="left:1053.50px;top:763.73px;font-size:14.5px;font-weight:700;color:#333;">28</div>
<div class="a" style="left:1084px;top:753px;width:35px;height:35px;background:#fdd8b0;border-radius:3px"></div>
<div class="a" style="left:1124px;top:753px;width:35px;height:35px;background:#f8b9b4;border-radius:3px"></div>
<div class="t" id="t56" style="left:986.00px;top:803.03px;font-size:14.5px;font-weight:400;color:#333;">3</div>
<div class="a" style="left:1004px;top:793px;width:35px;height:35px;background:#aaff00;border-radius:3px"></div>
<div class="t" id="t57" style="left:1013.50px;top:803.73px;font-size:14.5px;font-weight:700;color:#333;">30</div>
<div class="a" style="left:1044px;top:793px;width:35px;height:35px;background:#ffff00;border-radius:3px"></div>
<div class="t" id="t58" style="left:1053.50px;top:803.73px;font-size:14.5px;font-weight:700;color:#333;">77</div>
<div class="a" style="left:1084px;top:793px;width:35px;height:35px;background:#fbb829;border-radius:3px"></div>
<div class="t" id="t59" style="left:1093.50px;top:803.73px;font-size:14.5px;font-weight:700;color:#333;">33</div>
<div class="a" style="left:1124px;top:793px;width:35px;height:35px;background:#fdd8b0;border-radius:3px"></div>
<div class="t" id="t60" style="left:986.00px;top:843.03px;font-size:14.5px;font-weight:400;color:#333;">2</div>
<div class="a" style="left:1004px;top:833px;width:35px;height:35px;background:#00ee00;border-radius:3px"></div>
<div class="t" id="t61" style="left:1017.50px;top:843.73px;font-size:14.5px;font-weight:700;color:#333;">3</div>
<div class="a" style="left:1044px;top:833px;width:35px;height:35px;background:#aaff00;border-radius:3px"></div>
<div class="t" id="t62" style="left:1053.00px;top:843.73px;font-size:14.5px;font-weight:700;color:#333;">31</div>
<div class="a" style="left:1084px;top:833px;width:35px;height:35px;background:#ffff00;border-radius:3px"></div>
<div class="t" id="t63" style="left:1093.50px;top:843.73px;font-size:14.5px;font-weight:700;color:#333;">10</div>
<div class="a" style="left:1124px;top:833px;width:35px;height:35px;background:#fbb829;border-radius:3px"></div>
<div class="t" id="t64" style="left:1137.50px;top:843.73px;font-size:14.5px;font-weight:700;color:#333;">3</div>
<div class="t" id="t65" style="left:985.50px;top:883.03px;font-size:14.5px;font-weight:400;color:#333;">1</div>
<div class="a" style="left:1004px;top:873px;width:35px;height:35px;background:#00ee00;border-radius:3px"></div>
<div class="t" id="t66" style="left:1017.00px;top:883.73px;font-size:14.5px;font-weight:700;color:#333;">1</div>
<div class="a" style="left:1044px;top:873px;width:35px;height:35px;background:#00ee00;border-radius:3px"></div>
<div class="t" id="t67" style="left:1057.50px;top:883.73px;font-size:14.5px;font-weight:700;color:#333;">6</div>
<div class="a" style="left:1084px;top:873px;width:35px;height:35px;background:#e0fcb0;border-radius:3px"></div>
<div class="a" style="left:1124px;top:873px;width:35px;height:35px;background:#ffff00;border-radius:3px"></div>
<div class="t" id="t68" style="left:1137.00px;top:883.73px;font-size:14.5px;font-weight:700;color:#333;">1</div>
<div class="t" id="t69" style="left:1016.50px;top:916.73px;font-size:14.5px;font-weight:400;color:#333;">1</div>
<div class="t" id="t70" style="left:1057.00px;top:916.73px;font-size:14.5px;font-weight:400;color:#333;">2</div>
<div class="t" id="t71" style="left:1097.00px;top:916.73px;font-size:14.5px;font-weight:400;color:#333;">3</div>
<div class="t" id="t72" style="left:1137.00px;top:916.73px;font-size:14.5px;font-weight:400;color:#333;">4</div>
<div class="t" id="t73" style="left:1163.00px;top:917.15px;font-size:14px;font-weight:700;color:#333;letter-spacing:-1.000px;">EW</div>
<div class="t" id="t74" style="left:1259.78px;top:703.03px;font-size:16.5px;font-weight:700;color:#9a9a9a;letter-spacing:0.373px;">Restrisikoklasse</div>
<div class="t" id="t75" style="left:1516.00px;top:703.03px;font-size:16.5px;font-weight:700;color:#9a9a9a;letter-spacing:0.480px;">Anzahl</div>
<div class="a" style="left:1260px;top:726px;width:312px;height:1px;background:#dddddd"></div>
<div class="a" style="left:1263px;top:734px;width:6px;height:25px;background:#bbbbbb;border-radius:3px"></div>
<div class="t" id="t76" style="left:1282.00px;top:737.41px;font-size:17px;font-weight:400;color:#333;letter-spacing:-0.310px;">A - existenzbedrohend</div>
<div class="a" style="left:1518px;top:734px;width:50px;height:25px;background:#e6e6e6;border-radius:3px;overflow:hidden"><div style="position:absolute;right:0;top:0;width:6px;height:25px;background:#bbbbbb"></div></div>
<div class="t" id="t77" style="left:1536.00px;top:737.50px;font-size:15px;font-weight:700;color:#222;">0</div>
<div class="a" style="left:1263px;top:771px;width:6px;height:25px;background:#bbbbbb;border-radius:3px"></div>
<div class="t" id="t78" style="left:1281.00px;top:773.91px;font-size:17px;font-weight:400;color:#333;letter-spacing:-0.337px;">B - äußerst relevant</div>
<div class="a" style="left:1518px;top:771px;width:50px;height:25px;background:#e6e6e6;border-radius:3px;overflow:hidden"><div style="position:absolute;right:0;top:0;width:6px;height:25px;background:#bbbbbb"></div></div>
<div class="t" id="t79" style="left:1536.00px;top:774.50px;font-size:15px;font-weight:700;color:#222;">0</div>
<div class="a" style="left:1263px;top:809px;width:6px;height:25px;background:#fbb829;border-radius:3px"></div>
<div class="t" id="t80" style="left:1281.00px;top:811.71px;font-size:17px;font-weight:400;color:#333;letter-spacing:-0.455px;">C - relevant</div>
<div class="a" style="left:1518px;top:809px;width:50px;height:25px;background:#ffe7b8;border-radius:3px;overflow:hidden"><div style="position:absolute;right:0;top:0;width:6px;height:25px;background:#fbb829"></div></div>
<div class="t" id="t81" style="left:1531.50px;top:812.50px;font-size:15px;font-weight:700;color:#222;">64</div>
<div class="a" style="left:1263px;top:846px;width:6px;height:25px;background:#ffff00;border-radius:3px"></div>
<div class="t" id="t82" style="left:1281.00px;top:849.21px;font-size:17px;font-weight:400;color:#333;letter-spacing:-0.378px;">D - gering</div>
<div class="a" style="left:1518px;top:846px;width:50px;height:25px;background:#ffffaa;border-radius:3px;overflow:hidden"><div style="position:absolute;right:0;top:0;width:6px;height:25px;background:#ffff00"></div></div>
<div class="t" id="t83" style="left:1531.50px;top:849.50px;font-size:15px;font-weight:700;color:#222;">94</div>
<div class="a" style="left:1263px;top:884px;width:6px;height:25px;background:#aaff00;border-radius:3px"></div>
<div class="t" id="t84" style="left:1281.00px;top:887.31px;font-size:17px;font-weight:400;color:#333;letter-spacing:-0.400px;">E - vernachlässigbar</div>
<div class="a" style="left:1518px;top:884px;width:50px;height:25px;background:#e2ffb0;border-radius:3px;overflow:hidden"><div style="position:absolute;right:0;top:0;width:6px;height:25px;background:#aaff00"></div></div>
<div class="t" id="t85" style="left:1531.50px;top:887.50px;font-size:15px;font-weight:700;color:#222;">61</div>
<div class="a" style="left:1263px;top:921px;width:6px;height:25px;background:#00e600;border-radius:3px"></div>
<div class="t" id="t86" style="left:1281.00px;top:923.61px;font-size:17px;font-weight:400;color:#333;letter-spacing:-0.212px;">F - nicht relevant</div>
<div class="a" style="left:1518px;top:921px;width:50px;height:25px;background:#b2ffb2;border-radius:3px;overflow:hidden"><div style="position:absolute;right:0;top:0;width:6px;height:25px;background:#00e600"></div></div>
<div class="t" id="t87" style="left:1531.50px;top:924.50px;font-size:15px;font-weight:700;color:#222;">10</div>
<div class="t" id="t88" style="left:1782.78px;top:564.28px;font-size:37px;font-weight:700;color:#5070bb;letter-spacing:1.200px;">34</div>
<div class="t" id="t89" style="left:1736.00px;top:607.30px;font-size:15px;font-weight:700;color:#222;letter-spacing:0.760px;">offene Workflows</div>
<svg class="a" style="left:2017px;top:562px;" width="42" height="36" viewBox="0 0 42 36"><circle cx="18.2" cy="9.2" r="6.6" fill="none" stroke="#bbbbbb" stroke-width="2"/><path d="M18.6 22 Q13.5 21.5 11 19 Q9.5 17.6 7.6 18 Q1.8 19 1.8 27 Q1.8 32.6 7 32.6 L21 32.6" fill="none" stroke="#bbbbbb" stroke-width="2"/><path d="M36.5 16 L39.5 19 L27.5 31 L24.5 28 Z" fill="#bbbbbb"/><path d="M23.5 29 L26.5 32 L22.5 33.2 Z" fill="#bbbbbb"/></svg>
<div class="t" id="t90" style="left:2059.00px;top:564.28px;font-size:37px;font-weight:700;color:#bdbdbd;">0</div>
<div class="t" id="t91" style="left:1987.88px;top:607.30px;font-size:15px;font-weight:700;color:#bdbdbd;letter-spacing:0.773px;">von mir erstellt</div>
<svg class="a" style="left:2261px;top:562px;" width="42" height="36" viewBox="0 0 42 36"><circle cx="18.2" cy="9.2" r="6.6" fill="none" stroke="#bbbbbb" stroke-width="2"/><path d="M18.6 22 Q13.5 21.5 11 19 Q9.5 17.6 7.6 18 Q1.8 19 1.8 27 Q1.8 32.6 7 32.6 L22 32.6" fill="none" stroke="#bbbbbb" stroke-width="2"/><circle cx="29.4" cy="24.8" r="9.3" fill="#fff"/><circle cx="29.4" cy="24.8" r="8.6" fill="#bbbbbb"/><path d="M29.4 19.6 L29.4 26.2" stroke="#fff" stroke-width="2.6"/><circle cx="29.4" cy="29.4" r="1.5" fill="#fff"/></svg>
<div class="t" id="t92" style="left:2301.76px;top:564.28px;font-size:37px;font-weight:700;color:#bdbdbd;">0</div>
<div class="t" id="t93" style="left:2207.00px;top:607.30px;font-size:15px;font-weight:700;color:#bdbdbd;letter-spacing:0.750px;">von mir zu bearbeiten</div>
<div class="t" id="t94" style="left:1793.38px;top:754.28px;font-size:37px;font-weight:700;color:#bdbdbd;">0</div>
<div class="t" id="t95" style="left:1740.00px;top:797.30px;font-size:15px;font-weight:700;color:#bdbdbd;letter-spacing:0.671px;">offene Aufgaben</div>
<svg class="a" style="left:2017px;top:747.5px;" width="40" height="40" viewBox="0 0 40 40"><path d="M4.8 5.5 Q1.5 6 1.5 9.5 L1.5 29.5 Q1.5 33.5 5.5 33.5 L18.8 33.5" fill="none" stroke="#bbbbbb" stroke-width="2"/><path d="M31.5 5.5 Q35 6 35 9.5 L35 19" fill="none" stroke="#bbbbbb" stroke-width="2"/><path d="M9 1.8 L9 7.8 M18.2 1.8 L18.2 7.8 M27.3 1.8 L27.3 7.8" stroke="#bbbbbb" stroke-width="2.4" stroke-linecap="round"/><circle cx="13.7" cy="6" r="1.3" fill="#bbbbbb"/><circle cx="22.8" cy="6" r="1.3" fill="#bbbbbb"/><circle cx="7.9" cy="13.9" r="1.5" fill="#bbbbbb"/><circle cx="14.7" cy="13.9" r="1.5" fill="#bbbbbb"/><circle cx="21.5" cy="13.9" r="1.5" fill="#bbbbbb"/><circle cx="28.3" cy="13.9" r="1.5" fill="#bbbbbb"/><circle cx="7.9" cy="20" r="1.5" fill="#bbbbbb"/><circle cx="14.7" cy="20" r="1.5" fill="#bbbbbb"/><circle cx="21.5" cy="20" r="1.5" fill="#bbbbbb"/><circle cx="7.9" cy="26" r="1.5" fill="#bbbbbb"/><circle cx="14.7" cy="26" r="1.5" fill="#bbbbbb"/><circle cx="29.3" cy="28.7" r="9.4" fill="#fff"/><circle cx="29.3" cy="28.7" r="8.6" fill="#bbbbbb"/><path d="M29.3 23.3 L29.3 29 L33 31.5" fill="none" stroke="#fff" stroke-width="2"/></svg>
<div class="t" id="t96" style="left:2059.00px;top:754.28px;font-size:37px;font-weight:700;color:#bdbdbd;">0</div>
<div class="t" id="t97" style="left:1983.28px;top:797.30px;font-size:15px;font-weight:700;color:#bdbdbd;letter-spacing:0.733px;">demnächst fällig</div>
<svg class="a" style="left:2261px;top:747.5px;" width="40" height="40" viewBox="0 0 40 40"><path d="M4.8 5.5 Q1.5 6 1.5 9.5 L1.5 29.5 Q1.5 33.5 5.5 33.5 L18.8 33.5" fill="none" stroke="#bbbbbb" stroke-width="2"/><path d="M31.5 5.5 Q35 6 35 9.5 L35 19" fill="none" stroke="#bbbbbb" stroke-width="2"/><path d="M9 1.8 L9 7.8 M18.2 1.8 L18.2 7.8 M27.3 1.8 L27.3 7.8" stroke="#bbbbbb" stroke-width="2.4" stroke-linecap="round"/><circle cx="13.7" cy="6" r="1.3" fill="#bbbbbb"/><circle cx="22.8" cy="6" r="1.3" fill="#bbbbbb"/><circle cx="7.9" cy="13.9" r="1.5" fill="#bbbbbb"/><circle cx="14.7" cy="13.9" r="1.5" fill="#bbbbbb"/><circle cx="21.5" cy="13.9" r="1.5" fill="#bbbbbb"/><circle cx="28.3" cy="13.9" r="1.5" fill="#bbbbbb"/><circle cx="7.9" cy="20" r="1.5" fill="#bbbbbb"/><circle cx="14.7" cy="20" r="1.5" fill="#bbbbbb"/><circle cx="21.5" cy="20" r="1.5" fill="#bbbbbb"/><circle cx="7.9" cy="26" r="1.5" fill="#bbbbbb"/><circle cx="14.7" cy="26" r="1.5" fill="#bbbbbb"/><circle cx="29.3" cy="28.7" r="9.4" fill="#fff"/><circle cx="29.3" cy="28.7" r="8.6" fill="#bbbbbb"/><path d="M29.3 23.5 L29.3 30" stroke="#fff" stroke-width="2.6"/><circle cx="29.3" cy="33.2" r="1.5" fill="#fff"/></svg>
<div class="t" id="t98" style="left:2302.00px;top:754.28px;font-size:37px;font-weight:700;color:#bdbdbd;">0</div>
<div class="t" id="t99" style="left:2252.68px;top:797.30px;font-size:15px;font-weight:700;color:#bdbdbd;letter-spacing:0.978px;">überfällig</div>
<div class="t" id="t100" style="left:1781.78px;top:857.98px;font-size:37px;font-weight:700;color:#5070bb;letter-spacing:3.200px;">16</div>
<div class="t" id="t101" style="left:1716.78px;top:902.20px;font-size:15px;font-weight:700;color:#222;letter-spacing:0.660px;">offene Wiedervorlagen</div>
<svg class="a" style="left:2017px;top:852.5px;" width="40" height="40" viewBox="0 0 40 40"><path d="M4.8 5.5 Q1.5 6 1.5 9.5 L1.5 29.5 Q1.5 33.5 5.5 33.5 L18.8 33.5" fill="none" stroke="#bbbbbb" stroke-width="2"/><path d="M31.5 5.5 Q35 6 35 9.5 L35 19" fill="none" stroke="#bbbbbb" stroke-width="2"/><path d="M9 1.8 L9 7.8 M18.2 1.8 L18.2 7.8 M27.3 1.8 L27.3 7.8" stroke="#bbbbbb" stroke-width="2.4" stroke-linecap="round"/><circle cx="13.7" cy="6" r="1.3" fill="#bbbbbb"/><circle cx="22.8" cy="6" r="1.3" fill="#bbbbbb"/><circle cx="7.9" cy="13.9" r="1.5" fill="#bbbbbb"/><circle cx="14.7" cy="13.9" r="1.5" fill="#bbbbbb"/><circle cx="21.5" cy="13.9" r="1.5" fill="#bbbbbb"/><circle cx="28.3" cy="13.9" r="1.5" fill="#bbbbbb"/><circle cx="7.9" cy="20" r="1.5" fill="#bbbbbb"/><circle cx="14.7" cy="20" r="1.5" fill="#bbbbbb"/><circle cx="21.5" cy="20" r="1.5" fill="#bbbbbb"/><circle cx="7.9" cy="26" r="1.5" fill="#bbbbbb"/><circle cx="14.7" cy="26" r="1.5" fill="#bbbbbb"/><circle cx="29.3" cy="28.7" r="9.4" fill="#fff"/><circle cx="29.3" cy="28.7" r="8.6" fill="#bbbbbb"/><path d="M29.3 23.3 L29.3 29 L33 31.5" fill="none" stroke="#fff" stroke-width="2"/></svg>
<div class="t" id="t102" style="left:2059.00px;top:857.98px;font-size:37px;font-weight:700;color:#bdbdbd;">0</div>
<div class="t" id="t103" style="left:1983.28px;top:902.20px;font-size:15px;font-weight:700;color:#bdbdbd;letter-spacing:0.733px;">demnächst fällig</div>
<svg class="a" style="left:2250px;top:852.5px;" width="40" height="40" viewBox="0 0 40 40"><path d="M4.8 5.5 Q1.5 6 1.5 9.5 L1.5 29.5 Q1.5 33.5 5.5 33.5 L18.8 33.5" fill="none" stroke="#4f6fbf" stroke-width="2"/><path d="M31.5 5.5 Q35 6 35 9.5 L35 19" fill="none" stroke="#4f6fbf" stroke-width="2"/><path d="M9 1.8 L9 7.8 M18.2 1.8 L18.2 7.8 M27.3 1.8 L27.3 7.8" stroke="#4f6fbf" stroke-width="2.4" stroke-linecap="round"/><circle cx="13.7" cy="6" r="1.3" fill="#4f6fbf"/><circle cx="22.8" cy="6" r="1.3" fill="#4f6fbf"/><circle cx="7.9" cy="13.9" r="1.5" fill="#4f6fbf"/><circle cx="14.7" cy="13.9" r="1.5" fill="#4f6fbf"/><circle cx="21.5" cy="13.9" r="1.5" fill="#4f6fbf"/><circle cx="28.3" cy="13.9" r="1.5" fill="#4f6fbf"/><circle cx="7.9" cy="20" r="1.5" fill="#4f6fbf"/><circle cx="14.7" cy="20" r="1.5" fill="#4f6fbf"/><circle cx="21.5" cy="20" r="1.5" fill="#4f6fbf"/><circle cx="7.9" cy="26" r="1.5" fill="#4f6fbf"/><circle cx="14.7" cy="26" r="1.5" fill="#4f6fbf"/><circle cx="29.3" cy="28.7" r="9.4" fill="#fff"/><circle cx="29.3" cy="28.7" r="8.6" fill="#dd0000"/><path d="M29.3 23.5 L29.3 30" stroke="#fff" stroke-width="2.6"/><circle cx="29.3" cy="33.2" r="1.5" fill="#fff"/></svg>
<div class="t" id="t104" style="left:2291.00px;top:857.98px;font-size:37px;font-weight:700;color:#dd0000;letter-spacing:2.400px;">16</div>
<div class="t" id="t105" style="left:2252.68px;top:902.20px;font-size:15px;font-weight:700;color:#222;letter-spacing:0.978px;">überfällig</div>
<svg class="a" style="left:125.5px;top:1060px;" width="280" height="280" viewBox="0 0 280 280"><path d="M26.91 196.68 A126.5 126.5 0 0 1 139.78 13.50" fill="none" stroke="#a6dcc6" stroke-width="2.6" stroke-dasharray="8 6"/><path d="M141.10 13.50 A126.5 126.5 0 1 1 26.91 196.68" fill="none" stroke="#0aa86e" stroke-width="7.8" stroke-linecap="round"/></svg>
<div class="t" id="t106" style="left:244.50px;top:1142.48px;font-size:37px;font-weight:700;color:#5070bb;letter-spacing:0.600px;">71</div>
<div class="t" id="t107" style="left:216.07px;top:1185.30px;font-size:15px;font-weight:700;color:#222;letter-spacing:0.691px;">Verträge und</div>
<div class="t" id="t108" style="left:198.26px;top:1208.30px;font-size:15px;font-weight:700;color:#222;letter-spacing:0.440px;">Leistungsscheine</div>
<svg class="a" style="left:489px;top:1056px;" width="40" height="40" viewBox="0 0 40 40"><rect x="1" y="1" width="26" height="36.3" rx="4" fill="none" stroke="#5070bb" stroke-width="2"/><text x="14.2" y="27.3" text-anchor="middle" font-family="Liberation Sans" font-weight="bold" font-size="29" fill="#5070bb">§</text></svg>
<div class="t" id="t109" style="left:528.78px;top:1060.98px;font-size:37px;font-weight:700;color:#5070bb;letter-spacing:2.800px;">12</div>
<div class="t" id="t110" style="left:496.07px;top:1102.50px;font-size:15px;font-weight:700;color:#222;letter-spacing:0.629px;">angelegt</div>
<svg class="a" style="left:691px;top:1056px;" width="40" height="40" viewBox="0 0 40 40"><path d="M22.5 36.5 L5 36.5 Q1 36.5 1 32.5 L1 5 Q1 1 5 1 L23 1 Q27 1 27 5 L27 16.5" fill="none" stroke="#5070bb" stroke-width="2"/><text x="14.7" y="27.3" text-anchor="middle" font-family="Liberation Sans" font-weight="bold" font-size="29" fill="#5070bb">§</text><circle cx="29.5" cy="27.6" r="9.6" fill="#fff"/><circle cx="29.5" cy="27.6" r="8.6" fill="#5070bb"/><path d="M26.6 22.6 L33.4 27.6 L26.6 32.6 Z" fill="#fff"/></svg>
<div class="t" id="t111" style="left:734.00px;top:1060.98px;font-size:37px;font-weight:700;color:#5070bb;letter-spacing:1.000px;">48</div>
<div class="t" id="t112" style="left:713.50px;top:1102.50px;font-size:15px;font-weight:700;color:#222;letter-spacing:0.900px;">aktiv</div>
<svg class="a" style="left:500px;top:1160px;" width="40" height="40" viewBox="0 0 40 40"><path d="M19 36.5 L5 36.5 Q1 36.5 1 32.5 L1 5 Q1 1 5 1 L23 1 Q27 1 27 5 L27 17" fill="none" stroke="#5070bb" stroke-width="2"/><text x="14.2" y="27.3" text-anchor="middle" font-family="Liberation Sans" font-weight="bold" font-size="29" fill="#5070bb">§</text><ellipse cx="29" cy="27.5" rx="9.8" ry="7.6" fill="#fff"/><ellipse cx="29" cy="27.5" rx="8.2" ry="6.2" fill="#5070bb"/><path d="M30.5 32 L36 37 L34.5 30 Z" fill="#5070bb"/></svg>
<div class="t" id="t113" style="left:542.00px;top:1165.48px;font-size:37px;font-weight:700;color:#5070bb;">4</div>
<div class="t" id="t114" style="left:488.28px;top:1207.30px;font-size:15px;font-weight:700;color:#222;letter-spacing:0.800px;">angebahnt</div>
<svg class="a" style="left:703px;top:1160px;" width="40" height="40" viewBox="0 0 40 40"><path d="M19 36.5 L5 36.5 Q1 36.5 1 32.5 L1 5 Q1 1 5 1 L23 1 Q27 1 27 5 L27 17" fill="none" stroke="#5070bb" stroke-width="2"/><text x="14.2" y="27.3" text-anchor="middle" font-family="Liberation Sans" font-weight="bold" font-size="29" fill="#5070bb">§</text><circle cx="25" cy="27" r="6.5" fill="#fff"/><circle cx="25" cy="27" r="4.3" fill="none" stroke="#5070bb" stroke-width="2"/><path d="M28.3 30.3 L32.8 34.8" stroke="#5070bb" stroke-width="2.4" stroke-linecap="round"/></svg>
<div class="t" id="t115" style="left:744.00px;top:1165.48px;font-size:37px;font-weight:700;color:#5070bb;">3</div>
<div class="t" id="t116" style="left:691.00px;top:1207.30px;font-size:15px;font-weight:700;color:#222;letter-spacing:0.889px;">in Prüfung</div>
<div class="t" id="t117" style="left:1070.38px;top:1048.68px;font-size:37px;font-weight:700;color:#5070bb;">2</div>
<div class="t" id="t118" style="left:1052.17px;top:1092.10px;font-size:15px;font-weight:700;color:#222;letter-spacing:0.686px;">Vorfälle</div>
<svg class="a" style="left:1421px;top:1050px;" width="32" height="26" viewBox="0 0 32 26"><path d="M2.5 14 L11 22 L29 3.5" fill="none" stroke="#bdbdbd" stroke-width="6.5" stroke-linecap="round" stroke-linejoin="round"/></svg>
<div class="t" id="t119" style="left:1457.78px;top:1048.68px;font-size:37px;font-weight:700;color:#bdbdbd;">0</div>
<div class="t" id="t120" style="left:1391.57px;top:1092.10px;font-size:15px;font-weight:700;color:#bdbdbd;letter-spacing:0.233px;">abgeschlossen</div>
<div class="a" style="left:621px;top:63px;width:273px;height:302px;z-index:50;background:#fff;border:1px solid rgba(0,0,0,.15);box-shadow:0 6px 12px rgba(0,0,0,.175)"></div>
<div class="a" style="left:632px;top:259px;width:261px;height:105px;z-index:50;background:#f4f4f4;border-top:1px solid #e5e5e5"></div>
<div class="a" style="left:650px;top:300px;width:243px;height:64px;z-index:50;background:#fff"></div>
<div class="a" style="left:625px;top:65px;width:7px;height:300px;z-index:50;background:#fb3f43;border-radius:3.5px"></div>
<svg class="a" style="left:650px;top:67px;z-index:50;" width="25" height="25" viewBox="0 0 25 25"><rect width="25" height="25" rx="4" fill="#e5e5e5"/><path d="M12.1 4.1 L21.8 20 L2.6 20 Z" fill="#fff"/><path d="M12.1 8.6 L12.1 14.4" stroke="#e5e5e5" stroke-width="1.9"/><circle cx="12.1" cy="17" r="1.1" fill="#e5e5e5"/><circle cx="4.9" cy="16.8" r="4.2" fill="#e5e5e5"/><circle cx="4.9" cy="16.8" r="2.8" fill="none" stroke="#fff" stroke-width="1.5"/><path d="M7 19 L10.8 22" stroke="#fff" stroke-width="1.6"/></svg>
<div class="t" id="t121" style="left:681.38px;top:71.39px;font-size:17.5px;font-weight:400;color:#3a3a3a;letter-spacing:-0.523px;z-index:51;">Risiko-Cockpit</div>
<svg class="a" style="left:650px;top:100px;z-index:50;" width="25" height="25" viewBox="0 0 25 25"><rect width="25" height="25" rx="4" fill="#e5e5e5"/><path d="M8.2 3 L10.2 3.8 L4 12.5 L2 11.5 Z" fill="#fff"/><path d="M12 6 L14.2 7 L6.5 17.8 L4.5 16.8 Z" fill="#fff"/><path d="M14.6 8.4 L22.8 21.5 L6.8 21.5 Z" fill="#fff" stroke="#e5e5e5" stroke-width="0.8"/><path d="M14.6 12.5 L14.6 17.2" stroke="#e5e5e5" stroke-width="1.7"/><circle cx="14.6" cy="19.3" r="0.9" fill="#e5e5e5"/></svg>
<div class="t" id="t122" style="left:681.38px;top:104.19px;font-size:17.5px;font-weight:400;color:#3a3a3a;letter-spacing:-0.671px;z-index:51;">Cluster-Risiken</div>
<svg class="a" style="left:650px;top:132.5px;z-index:50;" width="25" height="25" viewBox="0 0 25 25"><rect width="25" height="25" rx="4" fill="#e5e5e5"/><path d="M12.1 4.1 L21.8 20 L2.6 20 Z" fill="#fff"/><path d="M12.1 8.6 L12.1 14.4" stroke="#e5e5e5" stroke-width="1.9"/><circle cx="12.1" cy="17" r="1.1" fill="#e5e5e5"/><circle cx="4.9" cy="16.8" r="4.2" fill="#e5e5e5"/><circle cx="4.9" cy="16.8" r="2.8" fill="none" stroke="#fff" stroke-width="1.5"/><path d="M7 19 L10.8 22" stroke="#fff" stroke-width="1.6"/></svg>
<div class="t" id="t123" style="left:681.38px;top:136.19px;font-size:17.5px;font-weight:400;color:#3a3a3a;letter-spacing:-1.180px;z-index:51;">GAP-Risiken</div>
<svg class="a" style="left:650px;top:165px;z-index:50;" width="25" height="25" viewBox="0 0 25 25"><rect width="25" height="25" rx="4" fill="#e5e5e5"/><path d="M2 13.4 Q3 6.5 9.6 6.5 Q16.4 6.5 17.5 13.4 Q15.6 11.8 13.6 13 Q11.6 11.6 9.6 13 Q7.6 11.6 5.6 13 Q3.8 11.8 2 13.4 Z" fill="#fff"/><path d="M9.4 12.5 L9.4 20.5 Q9.4 22 8 22 Q6.8 22 6.8 20.8" fill="none" stroke="#fff" stroke-width="1.3"/><path d="M19.2 3 L18.3 7.2 L20.8 8.3 L19.8 13.5" fill="none" stroke="#fff" stroke-width="1.2"/></svg>
<div class="t" id="t124" style="left:681.38px;top:168.89px;font-size:17.5px;font-weight:400;color:#3a3a3a;letter-spacing:-0.675px;z-index:51;">Maßnahmen</div>
<svg class="a" style="left:650px;top:197.5px;z-index:50;" width="25" height="25" viewBox="0 0 25 25"><rect width="25" height="25" rx="4" fill="#e5e5e5"/><path d="M2 10 Q2.8 3.2 8 3.2 Q13.2 3.2 14 10 Z" fill="#fff"/><path d="M6.6 14.2 Q7.6 7.4 14.5 7.4 Q21.4 7.4 22.4 14.2 Q20.4 12.6 18.4 13.8 Q16.4 12.4 14.5 13.8 Q12.6 12.4 10.6 13.8 Q8.6 12.6 6.6 14.2 Z" fill="#fff" stroke="#e5e5e5" stroke-width="0.8"/><path d="M14.4 13.4 L14.4 20.5 Q14.4 22 13 22 Q11.8 22 11.8 20.8" fill="none" stroke="#fff" stroke-width="1.3"/></svg>
<div class="t" id="t125" style="left:681.38px;top:199.69px;font-size:17.5px;font-weight:400;color:#3a3a3a;letter-spacing:-0.609px;z-index:51;">Cluster-Risiko-Maßnahmen</div>
<svg class="a" style="left:650px;top:230px;z-index:50;" width="25" height="25" viewBox="0 0 25 25"><rect width="25" height="25" rx="4" fill="#e5e5e5"/><path d="M2 13.4 Q3 6.5 9.6 6.5 Q16.4 6.5 17.5 13.4 Q15.6 11.8 13.6 13 Q11.6 11.6 9.6 13 Q7.6 11.6 5.6 13 Q3.8 11.8 2 13.4 Z" fill="#fff"/><path d="M9.4 12.5 L9.4 20.5 Q9.4 22 8 22 Q6.8 22 6.8 20.8" fill="none" stroke="#fff" stroke-width="1.3"/><path d="M19.2 3 L18.3 7.2 L20.8 8.3 L19.8 13.5" fill="none" stroke="#fff" stroke-width="1.2"/></svg>
<div class="t" id="t126" style="left:681.38px;top:233.99px;font-size:17.5px;font-weight:400;color:#3a3a3a;letter-spacing:-0.420px;z-index:51;">Sollmaßnahmen-Cockpit</div>
<svg class="a" style="left:650px;top:267px;z-index:50;" width="25" height="25" viewBox="0 0 25 25"><rect width="25" height="25" rx="4" fill="#e5e5e5"/><circle cx="5.8" cy="7" r="1.7" fill="#fff"/><circle cx="5.8" cy="12.5" r="1.7" fill="#fff"/><circle cx="5.8" cy="18" r="1.7" fill="#fff"/><path d="M9.5 7 L20.8 7 M9.5 12.5 L20.8 12.5 M9.5 18 L20.8 18" stroke="#fff" stroke-width="2.3"/></svg>
<div class="t" id="t127" style="left:681.38px;top:271.19px;font-size:17.5px;font-weight:400;color:#9d9d9d;letter-spacing:-0.543px;z-index:51;">Risikosteuerung</div>
<svg class="a" style="left:678px;top:304px;z-index:50;" width="25" height="25" viewBox="0 0 25 25"><rect width="25" height="25" rx="4" fill="#e5e5e5"/><path d="M15 5.2 L5.6 5.2 L5.6 19.8 L15 19.8" fill="none" stroke="#fff" stroke-width="2.8"/><path d="M8.5 12.5 L17 12.5" stroke="#fff" stroke-width="3"/><path d="M16.5 8.2 L21 12.5 L16.5 16.8 Z" fill="#fff"/></svg>
<div class="t" id="t128" style="left:709.57px;top:308.19px;font-size:17.5px;font-weight:400;color:#3a3a3a;letter-spacing:-0.457px;z-index:51;">Exit-Strategien</div>
<svg class="a" style="left:678px;top:336px;z-index:50;" width="25" height="25" viewBox="0 0 25 25"><rect width="25" height="25" rx="4" fill="#e5e5e5"/><path d="M12.5 3 L19.5 9 L19.5 15.5 L5.5 15.5 L5.5 9 Z" fill="none" stroke="#fff" stroke-width="1.7"/><path d="M12.5 8 L12.5 13 M10 10.5 L15 10.5" stroke="#fff" stroke-width="1.6"/><path d="M12.3 15.5 L12.3 18.5 Q12.3 20 9 22.5" fill="none" stroke="#fff" stroke-width="1.7"/></svg>
<div class="t" id="t129" style="left:709.57px;top:340.19px;font-size:17.5px;font-weight:400;color:#3a3a3a;letter-spacing:-0.229px;z-index:51;">Notfallkonzepte</div>
<div class="a" style="left:0px;top:1211px;width:2532px;height:6px;z-index:89;background:linear-gradient(rgba(0,0,0,0),rgba(0,0,0,.035))"></div>
<div class="a" style="left:0px;top:1217px;width:2532px;height:3px;z-index:90;background:#fff;border-top:1px solid #e2e2e2"></div>
<div class="a" style="left:0px;top:0px;width:2532px;height:1220px;z-index:100;border:1px solid #9c9c9c;pointer-events:none"></div>
</body></html>
